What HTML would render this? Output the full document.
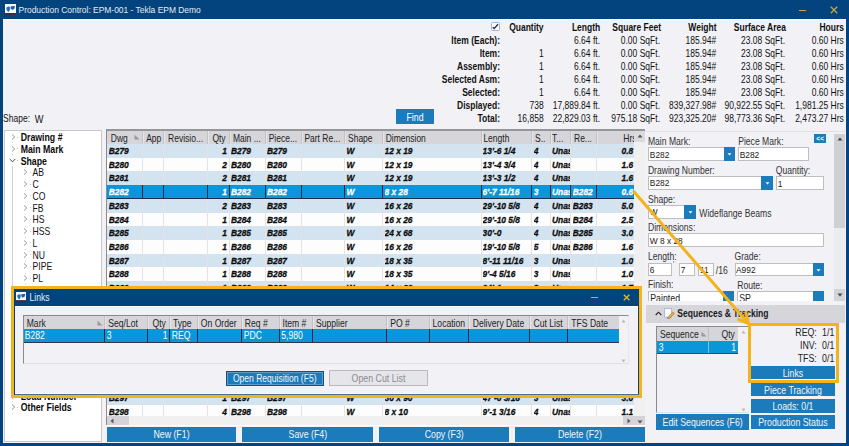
<!DOCTYPE html>
<html><head><meta charset="utf-8"><style>
html,body{margin:0;padding:0;width:849px;height:446px;overflow:hidden;background:#03447f}
div{position:absolute;box-sizing:border-box}
.t{font-family:"Liberation Sans",sans-serif;white-space:nowrap;transform:scaleY(1.18)}
</style></head><body>
<div style="left:0px;top:0px;width:849px;height:446px;background:#03447f"></div>
<div style="left:3px;top:19px;width:843px;height:423.8px;background:#f1f1f6"></div>
<div style="left:3px;top:19px;width:843px;height:1.2px;background:#fbfbfd"></div>
<svg style="position:absolute;left:4.5px;top:4.3px" width="11" height="11" viewBox="0 0 11 11"><rect x="0" y="0" width="11" height="9" fill="#f6f8fa"/><path d="M1.4 3.6 L3.2 2.4 L5.2 3.1 L4.9 5.8 L3.7 7.9 L2.5 7.2 L1.5 5.4 Z" fill="#1f6fb8"/><path d="M5.8 2.3 L10 1.9 L9.4 4.8 L7.2 6.1 L5.7 4.6 Z" fill="#1a5fa8"/><rect x="0" y="9" width="11" height="1.6" fill="#4a2626"/></svg>
<div class="t" style="top:2.9px;line-height:12px;font-size:8.45px;color:#e6ecf3;left:18.5px;">Production Control: EPM-001 - Tekla EPM Demo</div>
<div style="left:799px;top:9.5px;width:7px;height:1.1px;background:#c8a63c"></div>
<svg style="position:absolute;left:830px;top:6px" width="8" height="8" viewBox="0 0 8 8"><path d="M0.8 0.8 L7.2 7.2 M7.2 0.8 L0.8 7.2" stroke="#c8a63c" stroke-width="1.3"/></svg>
<div style="left:490.6px;top:21.6px;width:9px;height:9.8px;background:#fafbff;border:1px solid #a9b1d6;border-radius:1.5px;box-sizing:border-box"></div>
<svg style="position:absolute;left:491px;top:22px" width="9" height="9" viewBox="0 0 9 9"><path d="M1.8 5.2 L3.2 6.6 L7 2.3" stroke="#2a2d3a" stroke-width="1.35" fill="none"/></svg>
<div class="t" style="top:21px;line-height:12px;font-size:8.5px;color:#111;font-weight:bold;right:305.4px;text-align:right;">Quantity</div>
<div class="t" style="top:21px;line-height:12px;font-size:8.5px;color:#111;font-weight:bold;right:248.8px;text-align:right;">Length</div>
<div class="t" style="top:21px;line-height:12px;font-size:8.5px;color:#111;font-weight:bold;right:188px;text-align:right;">Square Feet</div>
<div class="t" style="top:21px;line-height:12px;font-size:8.5px;color:#111;font-weight:bold;right:132.5px;text-align:right;">Weight</div>
<div class="t" style="top:21px;line-height:12px;font-size:8.5px;color:#111;font-weight:bold;right:63px;text-align:right;">Surface Area</div>
<div class="t" style="top:21px;line-height:12px;font-size:8.5px;color:#111;font-weight:bold;right:5px;text-align:right;">Hours</div>
<div class="t" style="top:34.1px;line-height:12px;font-size:8.5px;color:#111;font-weight:bold;right:349px;text-align:right;">Item (Each):</div>
<div class="t" style="top:34.1px;line-height:12px;font-size:8.5px;color:#111;right:249px;text-align:right;">6.64 ft.</div>
<div class="t" style="top:34.1px;line-height:12px;font-size:8.5px;color:#111;right:189px;text-align:right;">0.00 SqFt.</div>
<div class="t" style="top:34.1px;line-height:12px;font-size:8.5px;color:#111;right:132.7px;text-align:right;">185.94#</div>
<div class="t" style="top:34.1px;line-height:12px;font-size:8.5px;color:#111;right:64px;text-align:right;">23.08 SqFt.</div>
<div class="t" style="top:34.1px;line-height:12px;font-size:8.5px;color:#111;right:5.2px;text-align:right;">0.60 Hrs</div>
<div class="t" style="top:47.15px;line-height:12px;font-size:8.5px;color:#111;font-weight:bold;right:349px;text-align:right;">Item:</div>
<div class="t" style="top:47.15px;line-height:12px;font-size:8.5px;color:#111;right:305.4px;text-align:right;">1</div>
<div class="t" style="top:47.15px;line-height:12px;font-size:8.5px;color:#111;right:249px;text-align:right;">6.64 ft.</div>
<div class="t" style="top:47.15px;line-height:12px;font-size:8.5px;color:#111;right:189px;text-align:right;">0.00 SqFt.</div>
<div class="t" style="top:47.15px;line-height:12px;font-size:8.5px;color:#111;right:132.7px;text-align:right;">185.94#</div>
<div class="t" style="top:47.15px;line-height:12px;font-size:8.5px;color:#111;right:64px;text-align:right;">23.08 SqFt.</div>
<div class="t" style="top:47.15px;line-height:12px;font-size:8.5px;color:#111;right:5.2px;text-align:right;">0.60 Hrs</div>
<div class="t" style="top:60.2px;line-height:12px;font-size:8.5px;color:#111;font-weight:bold;right:349px;text-align:right;">Assembly:</div>
<div class="t" style="top:60.2px;line-height:12px;font-size:8.5px;color:#111;right:305.4px;text-align:right;">1</div>
<div class="t" style="top:60.2px;line-height:12px;font-size:8.5px;color:#111;right:249px;text-align:right;">6.64 ft.</div>
<div class="t" style="top:60.2px;line-height:12px;font-size:8.5px;color:#111;right:189px;text-align:right;">0.00 SqFt.</div>
<div class="t" style="top:60.2px;line-height:12px;font-size:8.5px;color:#111;right:132.7px;text-align:right;">185.94#</div>
<div class="t" style="top:60.2px;line-height:12px;font-size:8.5px;color:#111;right:64px;text-align:right;">23.08 SqFt.</div>
<div class="t" style="top:60.2px;line-height:12px;font-size:8.5px;color:#111;right:5.2px;text-align:right;">0.60 Hrs</div>
<div class="t" style="top:73.25px;line-height:12px;font-size:8.5px;color:#111;font-weight:bold;right:349px;text-align:right;">Selected Asm:</div>
<div class="t" style="top:73.25px;line-height:12px;font-size:8.5px;color:#111;right:305.4px;text-align:right;">1</div>
<div class="t" style="top:73.25px;line-height:12px;font-size:8.5px;color:#111;right:249px;text-align:right;">6.64 ft.</div>
<div class="t" style="top:73.25px;line-height:12px;font-size:8.5px;color:#111;right:189px;text-align:right;">0.00 SqFt.</div>
<div class="t" style="top:73.25px;line-height:12px;font-size:8.5px;color:#111;right:132.7px;text-align:right;">185.94#</div>
<div class="t" style="top:73.25px;line-height:12px;font-size:8.5px;color:#111;right:64px;text-align:right;">23.08 SqFt.</div>
<div class="t" style="top:73.25px;line-height:12px;font-size:8.5px;color:#111;right:5.2px;text-align:right;">0.60 Hrs</div>
<div class="t" style="top:86.3px;line-height:12px;font-size:8.5px;color:#111;font-weight:bold;right:349px;text-align:right;">Selected:</div>
<div class="t" style="top:86.3px;line-height:12px;font-size:8.5px;color:#111;right:305.4px;text-align:right;">1</div>
<div class="t" style="top:86.3px;line-height:12px;font-size:8.5px;color:#111;right:249px;text-align:right;">6.64 ft.</div>
<div class="t" style="top:86.3px;line-height:12px;font-size:8.5px;color:#111;right:189px;text-align:right;">0.00 SqFt.</div>
<div class="t" style="top:86.3px;line-height:12px;font-size:8.5px;color:#111;right:132.7px;text-align:right;">185.94#</div>
<div class="t" style="top:86.3px;line-height:12px;font-size:8.5px;color:#111;right:64px;text-align:right;">23.08 SqFt.</div>
<div class="t" style="top:86.3px;line-height:12px;font-size:8.5px;color:#111;right:5.2px;text-align:right;">0.60 Hrs</div>
<div class="t" style="top:99.35px;line-height:12px;font-size:8.5px;color:#111;font-weight:bold;right:349px;text-align:right;">Displayed:</div>
<div class="t" style="top:99.35px;line-height:12px;font-size:8.5px;color:#111;right:305.4px;text-align:right;">738</div>
<div class="t" style="top:99.35px;line-height:12px;font-size:8.5px;color:#111;right:249px;text-align:right;">17,889.84 ft.</div>
<div class="t" style="top:99.35px;line-height:12px;font-size:8.5px;color:#111;right:189px;text-align:right;">0.00 SqFt.</div>
<div class="t" style="top:99.35px;line-height:12px;font-size:8.5px;color:#111;right:132.7px;text-align:right;">839,327.98#</div>
<div class="t" style="top:99.35px;line-height:12px;font-size:8.5px;color:#111;right:64px;text-align:right;">90,922.55 SqFt.</div>
<div class="t" style="top:99.35px;line-height:12px;font-size:8.5px;color:#111;right:5.2px;text-align:right;">1,981.25 Hrs</div>
<div class="t" style="top:112.4px;line-height:12px;font-size:8.5px;color:#111;font-weight:bold;right:349px;text-align:right;">Total:</div>
<div class="t" style="top:112.4px;line-height:12px;font-size:8.5px;color:#111;right:305.4px;text-align:right;">16,858</div>
<div class="t" style="top:112.4px;line-height:12px;font-size:8.5px;color:#111;right:249px;text-align:right;">22,829.03 ft.</div>
<div class="t" style="top:112.4px;line-height:12px;font-size:8.5px;color:#111;right:189px;text-align:right;">975.18 SqFt.</div>
<div class="t" style="top:112.4px;line-height:12px;font-size:8.5px;color:#111;right:132.7px;text-align:right;">923,325.20#</div>
<div class="t" style="top:112.4px;line-height:12px;font-size:8.5px;color:#111;right:64px;text-align:right;">98,773.36 SqFt.</div>
<div class="t" style="top:112.4px;line-height:12px;font-size:8.5px;color:#111;right:5.2px;text-align:right;">2,473.27 Hrs</div>
<div class="t" style="top:112px;line-height:12px;font-size:8.5px;color:#111;left:3.1px;">Shape:</div>
<div class="t" style="top:112.5px;line-height:12px;font-size:9.2px;color:#111;left:34.8px;">W</div>
<div style="left:396px;top:109px;width:38px;height:15px;background:#1c7bba"></div>
<div class="t" style="top:110.5px;line-height:12px;font-size:8.8px;color:#fff;left:396px;width:38px;text-align:center;">Find</div>
<div style="left:3.5px;top:130px;width:98.3px;height:312px;background:#fff;border:1px solid #c9c9cd;box-sizing:border-box"></div>
<svg style="position:absolute;left:10.6px;top:134px" width="5" height="6" viewBox="0 0 5 6"><path d="M1 0.5 L3.8 3 L1 5.5" stroke="#8a8a8a" stroke-width="0.9" fill="none"/></svg>
<div class="t" style="top:131px;line-height:12px;font-size:8.75px;color:#0a0a0a;font-weight:bold;left:20.7px;">Drawing #</div>
<svg style="position:absolute;left:10.6px;top:145.75px" width="5" height="6" viewBox="0 0 5 6"><path d="M1 0.5 L3.8 3 L1 5.5" stroke="#8a8a8a" stroke-width="0.9" fill="none"/></svg>
<div class="t" style="top:142.75px;line-height:12px;font-size:8.75px;color:#0a0a0a;font-weight:bold;left:20.7px;">Main Mark</div>
<svg style="position:absolute;left:9.4px;top:158px" width="7" height="5" viewBox="0 0 7 5"><path d="M0.7 1 L3.5 3.8 L6.3 1" stroke="#444" stroke-width="1" fill="none"/></svg>
<div class="t" style="top:154.5px;line-height:12px;font-size:8.75px;color:#0a0a0a;font-weight:bold;left:20.7px;">Shape</div>
<svg style="position:absolute;left:22.7px;top:169.25px" width="5" height="6" viewBox="0 0 5 6"><path d="M1 0.5 L3.8 3 L1 5.5" stroke="#8a8a8a" stroke-width="0.9" fill="none"/></svg>
<div class="t" style="top:166.25px;line-height:12px;font-size:8.6px;color:#111;left:32.6px;">AB</div>
<svg style="position:absolute;left:22.7px;top:181px" width="5" height="6" viewBox="0 0 5 6"><path d="M1 0.5 L3.8 3 L1 5.5" stroke="#8a8a8a" stroke-width="0.9" fill="none"/></svg>
<div class="t" style="top:178px;line-height:12px;font-size:8.6px;color:#111;left:32.6px;">C</div>
<svg style="position:absolute;left:22.7px;top:192.75px" width="5" height="6" viewBox="0 0 5 6"><path d="M1 0.5 L3.8 3 L1 5.5" stroke="#8a8a8a" stroke-width="0.9" fill="none"/></svg>
<div class="t" style="top:189.75px;line-height:12px;font-size:8.6px;color:#111;left:32.6px;">CO</div>
<svg style="position:absolute;left:22.7px;top:204.5px" width="5" height="6" viewBox="0 0 5 6"><path d="M1 0.5 L3.8 3 L1 5.5" stroke="#8a8a8a" stroke-width="0.9" fill="none"/></svg>
<div class="t" style="top:201.5px;line-height:12px;font-size:8.6px;color:#111;left:32.6px;">FB</div>
<svg style="position:absolute;left:22.7px;top:216.25px" width="5" height="6" viewBox="0 0 5 6"><path d="M1 0.5 L3.8 3 L1 5.5" stroke="#8a8a8a" stroke-width="0.9" fill="none"/></svg>
<div class="t" style="top:213.25px;line-height:12px;font-size:8.6px;color:#111;left:32.6px;">HS</div>
<svg style="position:absolute;left:22.7px;top:228px" width="5" height="6" viewBox="0 0 5 6"><path d="M1 0.5 L3.8 3 L1 5.5" stroke="#8a8a8a" stroke-width="0.9" fill="none"/></svg>
<div class="t" style="top:225px;line-height:12px;font-size:8.6px;color:#111;left:32.6px;">HSS</div>
<svg style="position:absolute;left:22.7px;top:239.75px" width="5" height="6" viewBox="0 0 5 6"><path d="M1 0.5 L3.8 3 L1 5.5" stroke="#8a8a8a" stroke-width="0.9" fill="none"/></svg>
<div class="t" style="top:236.75px;line-height:12px;font-size:8.6px;color:#111;left:32.6px;">L</div>
<svg style="position:absolute;left:22.7px;top:251.5px" width="5" height="6" viewBox="0 0 5 6"><path d="M1 0.5 L3.8 3 L1 5.5" stroke="#8a8a8a" stroke-width="0.9" fill="none"/></svg>
<div class="t" style="top:248.5px;line-height:12px;font-size:8.6px;color:#111;left:32.6px;">NU</div>
<svg style="position:absolute;left:22.7px;top:263.25px" width="5" height="6" viewBox="0 0 5 6"><path d="M1 0.5 L3.8 3 L1 5.5" stroke="#8a8a8a" stroke-width="0.9" fill="none"/></svg>
<div class="t" style="top:260.25px;line-height:12px;font-size:8.6px;color:#111;left:32.6px;">PIPE</div>
<svg style="position:absolute;left:22.7px;top:275px" width="5" height="6" viewBox="0 0 5 6"><path d="M1 0.5 L3.8 3 L1 5.5" stroke="#8a8a8a" stroke-width="0.9" fill="none"/></svg>
<div class="t" style="top:272px;line-height:12px;font-size:8.6px;color:#111;left:32.6px;">PL</div>
<svg style="position:absolute;left:22.7px;top:286.75px" width="5" height="6" viewBox="0 0 5 6"><path d="M1 0.5 L3.8 3 L1 5.5" stroke="#8a8a8a" stroke-width="0.9" fill="none"/></svg>
<div class="t" style="top:283.75px;line-height:12px;font-size:8.6px;color:#111;left:32.6px;">W</div>
<svg style="position:absolute;left:22.7px;top:298.5px" width="5" height="6" viewBox="0 0 5 6"><path d="M1 0.5 L3.8 3 L1 5.5" stroke="#8a8a8a" stroke-width="0.9" fill="none"/></svg>
<div class="t" style="top:295.5px;line-height:12px;font-size:8.6px;color:#111;left:32.6px;">WT</div>
<svg style="position:absolute;left:10.6px;top:310.25px" width="5" height="6" viewBox="0 0 5 6"><path d="M1 0.5 L3.8 3 L1 5.5" stroke="#8a8a8a" stroke-width="0.9" fill="none"/></svg>
<div class="t" style="top:307.25px;line-height:12px;font-size:8.75px;color:#0a0a0a;font-weight:bold;left:20.7px;">Sequence</div>
<svg style="position:absolute;left:10.6px;top:322px" width="5" height="6" viewBox="0 0 5 6"><path d="M1 0.5 L3.8 3 L1 5.5" stroke="#8a8a8a" stroke-width="0.9" fill="none"/></svg>
<div class="t" style="top:319px;line-height:12px;font-size:8.75px;color:#0a0a0a;font-weight:bold;left:20.7px;">Route</div>
<svg style="position:absolute;left:10.6px;top:333.75px" width="5" height="6" viewBox="0 0 5 6"><path d="M1 0.5 L3.8 3 L1 5.5" stroke="#8a8a8a" stroke-width="0.9" fill="none"/></svg>
<div class="t" style="top:330.75px;line-height:12px;font-size:8.75px;color:#0a0a0a;font-weight:bold;left:20.7px;">Grade</div>
<svg style="position:absolute;left:10.6px;top:345.5px" width="5" height="6" viewBox="0 0 5 6"><path d="M1 0.5 L3.8 3 L1 5.5" stroke="#8a8a8a" stroke-width="0.9" fill="none"/></svg>
<div class="t" style="top:342.5px;line-height:12px;font-size:8.75px;color:#0a0a0a;font-weight:bold;left:20.7px;">Finish</div>
<svg style="position:absolute;left:10.6px;top:357.25px" width="5" height="6" viewBox="0 0 5 6"><path d="M1 0.5 L3.8 3 L1 5.5" stroke="#8a8a8a" stroke-width="0.9" fill="none"/></svg>
<div class="t" style="top:354.25px;line-height:12px;font-size:8.75px;color:#0a0a0a;font-weight:bold;left:20.7px;">Status</div>
<svg style="position:absolute;left:10.6px;top:369px" width="5" height="6" viewBox="0 0 5 6"><path d="M1 0.5 L3.8 3 L1 5.5" stroke="#8a8a8a" stroke-width="0.9" fill="none"/></svg>
<div class="t" style="top:366px;line-height:12px;font-size:8.75px;color:#0a0a0a;font-weight:bold;left:20.7px;">Site</div>
<svg style="position:absolute;left:10.6px;top:380.75px" width="5" height="6" viewBox="0 0 5 6"><path d="M1 0.5 L3.8 3 L1 5.5" stroke="#8a8a8a" stroke-width="0.9" fill="none"/></svg>
<div class="t" style="top:377.75px;line-height:12px;font-size:8.75px;color:#0a0a0a;font-weight:bold;left:20.7px;">Truck</div>
<svg style="position:absolute;left:10.6px;top:392.5px" width="5" height="6" viewBox="0 0 5 6"><path d="M1 0.5 L3.8 3 L1 5.5" stroke="#8a8a8a" stroke-width="0.9" fill="none"/></svg>
<div class="t" style="top:389.5px;line-height:12px;font-size:8.75px;color:#0a0a0a;font-weight:bold;left:20.7px;">Load Number</div>
<svg style="position:absolute;left:10.6px;top:404.25px" width="5" height="6" viewBox="0 0 5 6"><path d="M1 0.5 L3.8 3 L1 5.5" stroke="#8a8a8a" stroke-width="0.9" fill="none"/></svg>
<div class="t" style="top:401.25px;line-height:12px;font-size:8.75px;color:#0a0a0a;font-weight:bold;left:20.7px;">Other Fields</div>
<div style="left:12px;top:165.7px;width:1px;height:124.3px;background:#d0d0d3"></div>
<div style="left:17.4px;top:136.5px;width:1px;height:1px;background:#c4c4c8"></div>
<div style="left:12px;top:142.4px;width:1px;height:1px;background:#d0d0d4"></div>
<div style="left:17.4px;top:148.25px;width:1px;height:1px;background:#c4c4c8"></div>
<div style="left:12px;top:154.15px;width:1px;height:1px;background:#d0d0d4"></div>
<div style="left:17.4px;top:160px;width:1px;height:1px;background:#c4c4c8"></div>
<div style="left:12px;top:165.9px;width:1px;height:1px;background:#d0d0d4"></div>
<div style="left:29.5px;top:171.75px;width:1px;height:1px;background:#c4c4c8"></div>
<div style="left:24.5px;top:166.75px;width:1px;height:1px;background:#d0d0d4"></div>
<div style="left:29.5px;top:183.5px;width:1px;height:1px;background:#c4c4c8"></div>
<div style="left:24.5px;top:178.5px;width:1px;height:1px;background:#d0d0d4"></div>
<div style="left:29.5px;top:195.25px;width:1px;height:1px;background:#c4c4c8"></div>
<div style="left:24.5px;top:190.25px;width:1px;height:1px;background:#d0d0d4"></div>
<div style="left:29.5px;top:207px;width:1px;height:1px;background:#c4c4c8"></div>
<div style="left:24.5px;top:202px;width:1px;height:1px;background:#d0d0d4"></div>
<div style="left:29.5px;top:218.75px;width:1px;height:1px;background:#c4c4c8"></div>
<div style="left:24.5px;top:213.75px;width:1px;height:1px;background:#d0d0d4"></div>
<div style="left:29.5px;top:230.5px;width:1px;height:1px;background:#c4c4c8"></div>
<div style="left:24.5px;top:225.5px;width:1px;height:1px;background:#d0d0d4"></div>
<div style="left:29.5px;top:242.25px;width:1px;height:1px;background:#c4c4c8"></div>
<div style="left:24.5px;top:237.25px;width:1px;height:1px;background:#d0d0d4"></div>
<div style="left:29.5px;top:254px;width:1px;height:1px;background:#c4c4c8"></div>
<div style="left:24.5px;top:249px;width:1px;height:1px;background:#d0d0d4"></div>
<div style="left:29.5px;top:265.75px;width:1px;height:1px;background:#c4c4c8"></div>
<div style="left:24.5px;top:260.75px;width:1px;height:1px;background:#d0d0d4"></div>
<div style="left:29.5px;top:277.5px;width:1px;height:1px;background:#c4c4c8"></div>
<div style="left:24.5px;top:272.5px;width:1px;height:1px;background:#d0d0d4"></div>
<div style="left:29.5px;top:289.25px;width:1px;height:1px;background:#c4c4c8"></div>
<div style="left:24.5px;top:284.25px;width:1px;height:1px;background:#d0d0d4"></div>
<div style="left:29.5px;top:301px;width:1px;height:1px;background:#c4c4c8"></div>
<div style="left:24.5px;top:296px;width:1px;height:1px;background:#d0d0d4"></div>
<div style="left:17.4px;top:312.75px;width:1px;height:1px;background:#c4c4c8"></div>
<div style="left:12px;top:318.65px;width:1px;height:1px;background:#d0d0d4"></div>
<div style="left:17.4px;top:324.5px;width:1px;height:1px;background:#c4c4c8"></div>
<div style="left:12px;top:330.4px;width:1px;height:1px;background:#d0d0d4"></div>
<div style="left:17.4px;top:336.25px;width:1px;height:1px;background:#c4c4c8"></div>
<div style="left:12px;top:342.15px;width:1px;height:1px;background:#d0d0d4"></div>
<div style="left:17.4px;top:348px;width:1px;height:1px;background:#c4c4c8"></div>
<div style="left:12px;top:353.9px;width:1px;height:1px;background:#d0d0d4"></div>
<div style="left:17.4px;top:359.75px;width:1px;height:1px;background:#c4c4c8"></div>
<div style="left:12px;top:365.65px;width:1px;height:1px;background:#d0d0d4"></div>
<div style="left:17.4px;top:371.5px;width:1px;height:1px;background:#c4c4c8"></div>
<div style="left:12px;top:377.4px;width:1px;height:1px;background:#d0d0d4"></div>
<div style="left:17.4px;top:383.25px;width:1px;height:1px;background:#c4c4c8"></div>
<div style="left:12px;top:389.15px;width:1px;height:1px;background:#d0d0d4"></div>
<div style="left:17.4px;top:395px;width:1px;height:1px;background:#c4c4c8"></div>
<div style="left:12px;top:400.9px;width:1px;height:1px;background:#d0d0d4"></div>
<div style="left:17.4px;top:406.75px;width:1px;height:1px;background:#c4c4c8"></div>
<div style="left:12px;top:412.65px;width:1px;height:1px;background:#d0d0d4"></div>
<div style="left:105.5px;top:129px;width:539.5px;height:296.5px;background:#fff"></div>
<div style="left:105.5px;top:128.8px;width:539.5px;height:1.8px;background:#b4b4b8"></div>
<div style="left:105.5px;top:129.3px;width:539.5px;height:1.3px;background:#96969a"></div>
<div style="left:106px;top:129.3px;width:1.1px;height:296.2px;background:#8c8c90"></div>
<div style="left:107px;top:130.6px;width:527.2px;height:13.4px;background:#d6d6da"></div>
<div style="left:142.2px;top:130.6px;width:1px;height:13.4px;background:#c2c2c6"></div>
<div style="left:143.2px;top:130.6px;width:0.7px;height:13.4px;background:#e6e6ea"></div>
<div style="left:163.4px;top:130.6px;width:1px;height:13.4px;background:#c2c2c6"></div>
<div style="left:164.4px;top:130.6px;width:0.7px;height:13.4px;background:#e6e6ea"></div>
<div style="left:206.5px;top:130.6px;width:1px;height:13.4px;background:#c2c2c6"></div>
<div style="left:207.5px;top:130.6px;width:0.7px;height:13.4px;background:#e6e6ea"></div>
<div style="left:228.9px;top:130.6px;width:1px;height:13.4px;background:#c2c2c6"></div>
<div style="left:229.9px;top:130.6px;width:0.7px;height:13.4px;background:#e6e6ea"></div>
<div style="left:264.7px;top:130.6px;width:1px;height:13.4px;background:#c2c2c6"></div>
<div style="left:265.7px;top:130.6px;width:0.7px;height:13.4px;background:#e6e6ea"></div>
<div style="left:300.5px;top:130.6px;width:1px;height:13.4px;background:#c2c2c6"></div>
<div style="left:301.5px;top:130.6px;width:0.7px;height:13.4px;background:#e6e6ea"></div>
<div style="left:344px;top:130.6px;width:1px;height:13.4px;background:#c2c2c6"></div>
<div style="left:345px;top:130.6px;width:0.7px;height:13.4px;background:#e6e6ea"></div>
<div style="left:381.7px;top:130.6px;width:1px;height:13.4px;background:#c2c2c6"></div>
<div style="left:382.7px;top:130.6px;width:0.7px;height:13.4px;background:#e6e6ea"></div>
<div style="left:480.5px;top:130.6px;width:1px;height:13.4px;background:#c2c2c6"></div>
<div style="left:481.5px;top:130.6px;width:0.7px;height:13.4px;background:#e6e6ea"></div>
<div style="left:531.2px;top:130.6px;width:1px;height:13.4px;background:#c2c2c6"></div>
<div style="left:532.2px;top:130.6px;width:0.7px;height:13.4px;background:#e6e6ea"></div>
<div style="left:549.5px;top:130.6px;width:1px;height:13.4px;background:#c2c2c6"></div>
<div style="left:550.5px;top:130.6px;width:0.7px;height:13.4px;background:#e6e6ea"></div>
<div style="left:569.5px;top:130.6px;width:1px;height:13.4px;background:#c2c2c6"></div>
<div style="left:570.5px;top:130.6px;width:0.7px;height:13.4px;background:#e6e6ea"></div>
<div style="left:595.6px;top:130.6px;width:1px;height:13.4px;background:#c2c2c6"></div>
<div style="left:596.6px;top:130.6px;width:0.7px;height:13.4px;background:#e6e6ea"></div>
<div class="t" style="top:131.5px;line-height:12px;font-size:8.5px;color:#222;left:110.8px;">Dwg</div>
<div class="t" style="top:131.5px;line-height:12px;font-size:8.5px;color:#222;left:146.2px;">App</div>
<div class="t" style="top:131.5px;line-height:12px;font-size:8.5px;color:#222;left:168.1px;">Revisio...</div>
<div class="t" style="top:131.5px;line-height:12px;font-size:8.5px;color:#222;right:623.4px;text-align:right;">Qty</div>
<div class="t" style="top:131.5px;line-height:12px;font-size:8.5px;color:#222;left:232.9px;">Main ...</div>
<div class="t" style="top:131.5px;line-height:12px;font-size:8.5px;color:#222;left:268.7px;">Piece...</div>
<div class="t" style="top:131.5px;line-height:12px;font-size:8.5px;color:#222;left:304.4px;">Part Re...</div>
<div class="t" style="top:131.5px;line-height:12px;font-size:8.5px;color:#222;left:348px;">Shape</div>
<div class="t" style="top:131.5px;line-height:12px;font-size:8.5px;color:#222;left:385.7px;">Dimension</div>
<div class="t" style="top:131.5px;line-height:12px;font-size:8.5px;color:#222;left:483.4px;">Length</div>
<div class="t" style="top:131.5px;line-height:12px;font-size:8.5px;color:#222;left:535px;">S..</div>
<div class="t" style="top:131.5px;line-height:12px;font-size:8.5px;color:#222;left:552px;">T...</div>
<div class="t" style="top:131.5px;line-height:12px;font-size:8.5px;color:#222;left:574px;">Re...</div>
<div style="left:597px;top:131px;width:37.2px;height:13px;overflow:hidden"><div class="t" style="right:-2.3px;top:0.5px;line-height:12px;font-size:8.5px;color:#222">Hrs</div></div>
<svg style="position:absolute;left:134px;top:134px" width="6" height="6" viewBox="0 0 6 6"><path d="M0.5 0.5 L5.5 5.5 L0.5 5.5 Z" fill="#9a9a9a"/></svg>
<div style="left:107px;top:144px;width:527.2px;height:13.72px;background:#d3e3ef"></div>
<div style="left:142.2px;top:144px;width:1px;height:13.72px;background:#e3e3e6"></div>
<div style="left:163.4px;top:144px;width:1px;height:13.72px;background:#e3e3e6"></div>
<div style="left:206.5px;top:144px;width:1px;height:13.72px;background:#e3e3e6"></div>
<div style="left:228.9px;top:144px;width:1px;height:13.72px;background:#e3e3e6"></div>
<div style="left:264.7px;top:144px;width:1px;height:13.72px;background:#e3e3e6"></div>
<div style="left:300.5px;top:144px;width:1px;height:13.72px;background:#e3e3e6"></div>
<div style="left:344px;top:144px;width:1px;height:13.72px;background:#e3e3e6"></div>
<div style="left:381.7px;top:144px;width:1px;height:13.72px;background:#e3e3e6"></div>
<div style="left:480.5px;top:144px;width:1px;height:13.72px;background:#e3e3e6"></div>
<div style="left:531.2px;top:144px;width:1px;height:13.72px;background:#e3e3e6"></div>
<div style="left:549.5px;top:144px;width:1px;height:13.72px;background:#e3e3e6"></div>
<div style="left:569.5px;top:144px;width:1px;height:13.72px;background:#e3e3e6"></div>
<div style="left:595.6px;top:144px;width:1px;height:13.72px;background:#e3e3e6"></div>
<div class="t" style="top:143.96px;line-height:12px;font-size:8.4px;color:#0c0c0c;font-weight:bold;font-style:italic;left:108.7px;width:33.5px;overflow:hidden;-webkit-text-stroke:0.25px #0c0c0c;">B279</div>
<div class="t" style="top:143.96px;line-height:12px;font-size:8.4px;color:#0c0c0c;font-weight:bold;font-style:italic;right:622px;text-align:right;-webkit-text-stroke:0.25px #0c0c0c;">1</div>
<div class="t" style="top:143.96px;line-height:12px;font-size:8.4px;color:#0c0c0c;font-weight:bold;font-style:italic;left:231px;width:33.7px;overflow:hidden;-webkit-text-stroke:0.25px #0c0c0c;">B279</div>
<div class="t" style="top:143.96px;line-height:12px;font-size:8.4px;color:#0c0c0c;font-weight:bold;font-style:italic;left:267px;width:33.5px;overflow:hidden;-webkit-text-stroke:0.25px #0c0c0c;">B279</div>
<div class="t" style="top:143.96px;line-height:12px;font-size:8.4px;color:#0c0c0c;font-weight:bold;font-style:italic;left:346.4px;width:35.3px;overflow:hidden;-webkit-text-stroke:0.25px #0c0c0c;">W</div>
<div class="t" style="top:143.96px;line-height:12px;font-size:8.4px;color:#0c0c0c;font-weight:bold;font-style:italic;left:384.5px;width:96px;overflow:hidden;-webkit-text-stroke:0.25px #0c0c0c;">12 x 19</div>
<div class="t" style="top:143.96px;line-height:12px;font-size:8.4px;color:#0c0c0c;font-weight:bold;font-style:italic;left:482.6px;width:48.6px;overflow:hidden;-webkit-text-stroke:0.25px #0c0c0c;">13'-6 1/4</div>
<div class="t" style="top:143.96px;line-height:12px;font-size:8.4px;color:#0c0c0c;font-weight:bold;font-style:italic;left:533.7px;width:15.8px;overflow:hidden;-webkit-text-stroke:0.25px #0c0c0c;">4</div>
<div class="t" style="top:143.96px;line-height:12px;font-size:8.4px;color:#0c0c0c;font-weight:bold;font-style:italic;left:552px;width:17.5px;overflow:hidden;-webkit-text-stroke:0.25px #0c0c0c;">Unas</div>
<div class="t" style="top:143.96px;line-height:12px;font-size:8.4px;color:#0c0c0c;font-weight:bold;font-style:italic;right:215.8px;text-align:right;-webkit-text-stroke:0.25px #0c0c0c;">0.8</div>
<div style="left:107px;top:157.72px;width:527.2px;height:13.72px;background:#fdfdfd"></div>
<div style="left:142.2px;top:157.72px;width:1px;height:13.72px;background:#e3e3e6"></div>
<div style="left:163.4px;top:157.72px;width:1px;height:13.72px;background:#e3e3e6"></div>
<div style="left:206.5px;top:157.72px;width:1px;height:13.72px;background:#e3e3e6"></div>
<div style="left:228.9px;top:157.72px;width:1px;height:13.72px;background:#e3e3e6"></div>
<div style="left:264.7px;top:157.72px;width:1px;height:13.72px;background:#e3e3e6"></div>
<div style="left:300.5px;top:157.72px;width:1px;height:13.72px;background:#e3e3e6"></div>
<div style="left:344px;top:157.72px;width:1px;height:13.72px;background:#e3e3e6"></div>
<div style="left:381.7px;top:157.72px;width:1px;height:13.72px;background:#e3e3e6"></div>
<div style="left:480.5px;top:157.72px;width:1px;height:13.72px;background:#e3e3e6"></div>
<div style="left:531.2px;top:157.72px;width:1px;height:13.72px;background:#e3e3e6"></div>
<div style="left:549.5px;top:157.72px;width:1px;height:13.72px;background:#e3e3e6"></div>
<div style="left:569.5px;top:157.72px;width:1px;height:13.72px;background:#e3e3e6"></div>
<div style="left:595.6px;top:157.72px;width:1px;height:13.72px;background:#e3e3e6"></div>
<div class="t" style="top:157.67px;line-height:12px;font-size:8.4px;color:#0c0c0c;font-weight:bold;font-style:italic;left:108.7px;width:33.5px;overflow:hidden;-webkit-text-stroke:0.25px #0c0c0c;">B280</div>
<div class="t" style="top:157.67px;line-height:12px;font-size:8.4px;color:#0c0c0c;font-weight:bold;font-style:italic;right:622px;text-align:right;-webkit-text-stroke:0.25px #0c0c0c;">2</div>
<div class="t" style="top:157.67px;line-height:12px;font-size:8.4px;color:#0c0c0c;font-weight:bold;font-style:italic;left:231px;width:33.7px;overflow:hidden;-webkit-text-stroke:0.25px #0c0c0c;">B280</div>
<div class="t" style="top:157.67px;line-height:12px;font-size:8.4px;color:#0c0c0c;font-weight:bold;font-style:italic;left:267px;width:33.5px;overflow:hidden;-webkit-text-stroke:0.25px #0c0c0c;">B280</div>
<div class="t" style="top:157.67px;line-height:12px;font-size:8.4px;color:#0c0c0c;font-weight:bold;font-style:italic;left:346.4px;width:35.3px;overflow:hidden;-webkit-text-stroke:0.25px #0c0c0c;">W</div>
<div class="t" style="top:157.67px;line-height:12px;font-size:8.4px;color:#0c0c0c;font-weight:bold;font-style:italic;left:384.5px;width:96px;overflow:hidden;-webkit-text-stroke:0.25px #0c0c0c;">12 x 19</div>
<div class="t" style="top:157.67px;line-height:12px;font-size:8.4px;color:#0c0c0c;font-weight:bold;font-style:italic;left:482.6px;width:48.6px;overflow:hidden;-webkit-text-stroke:0.25px #0c0c0c;">13'-4 3/4</div>
<div class="t" style="top:157.67px;line-height:12px;font-size:8.4px;color:#0c0c0c;font-weight:bold;font-style:italic;left:533.7px;width:15.8px;overflow:hidden;-webkit-text-stroke:0.25px #0c0c0c;">4</div>
<div class="t" style="top:157.67px;line-height:12px;font-size:8.4px;color:#0c0c0c;font-weight:bold;font-style:italic;left:552px;width:17.5px;overflow:hidden;-webkit-text-stroke:0.25px #0c0c0c;">Unas</div>
<div class="t" style="top:157.67px;line-height:12px;font-size:8.4px;color:#0c0c0c;font-weight:bold;font-style:italic;right:215.8px;text-align:right;-webkit-text-stroke:0.25px #0c0c0c;">1.6</div>
<div style="left:107px;top:171.43px;width:527.2px;height:13.72px;background:#d3e3ef"></div>
<div style="left:142.2px;top:171.43px;width:1px;height:13.72px;background:#e3e3e6"></div>
<div style="left:163.4px;top:171.43px;width:1px;height:13.72px;background:#e3e3e6"></div>
<div style="left:206.5px;top:171.43px;width:1px;height:13.72px;background:#e3e3e6"></div>
<div style="left:228.9px;top:171.43px;width:1px;height:13.72px;background:#e3e3e6"></div>
<div style="left:264.7px;top:171.43px;width:1px;height:13.72px;background:#e3e3e6"></div>
<div style="left:300.5px;top:171.43px;width:1px;height:13.72px;background:#e3e3e6"></div>
<div style="left:344px;top:171.43px;width:1px;height:13.72px;background:#e3e3e6"></div>
<div style="left:381.7px;top:171.43px;width:1px;height:13.72px;background:#e3e3e6"></div>
<div style="left:480.5px;top:171.43px;width:1px;height:13.72px;background:#e3e3e6"></div>
<div style="left:531.2px;top:171.43px;width:1px;height:13.72px;background:#e3e3e6"></div>
<div style="left:549.5px;top:171.43px;width:1px;height:13.72px;background:#e3e3e6"></div>
<div style="left:569.5px;top:171.43px;width:1px;height:13.72px;background:#e3e3e6"></div>
<div style="left:595.6px;top:171.43px;width:1px;height:13.72px;background:#e3e3e6"></div>
<div class="t" style="top:171.39px;line-height:12px;font-size:8.4px;color:#0c0c0c;font-weight:bold;font-style:italic;left:108.7px;width:33.5px;overflow:hidden;-webkit-text-stroke:0.25px #0c0c0c;">B281</div>
<div class="t" style="top:171.39px;line-height:12px;font-size:8.4px;color:#0c0c0c;font-weight:bold;font-style:italic;right:622px;text-align:right;-webkit-text-stroke:0.25px #0c0c0c;">2</div>
<div class="t" style="top:171.39px;line-height:12px;font-size:8.4px;color:#0c0c0c;font-weight:bold;font-style:italic;left:231px;width:33.7px;overflow:hidden;-webkit-text-stroke:0.25px #0c0c0c;">B281</div>
<div class="t" style="top:171.39px;line-height:12px;font-size:8.4px;color:#0c0c0c;font-weight:bold;font-style:italic;left:267px;width:33.5px;overflow:hidden;-webkit-text-stroke:0.25px #0c0c0c;">B281</div>
<div class="t" style="top:171.39px;line-height:12px;font-size:8.4px;color:#0c0c0c;font-weight:bold;font-style:italic;left:346.4px;width:35.3px;overflow:hidden;-webkit-text-stroke:0.25px #0c0c0c;">W</div>
<div class="t" style="top:171.39px;line-height:12px;font-size:8.4px;color:#0c0c0c;font-weight:bold;font-style:italic;left:384.5px;width:96px;overflow:hidden;-webkit-text-stroke:0.25px #0c0c0c;">12 x 19</div>
<div class="t" style="top:171.39px;line-height:12px;font-size:8.4px;color:#0c0c0c;font-weight:bold;font-style:italic;left:482.6px;width:48.6px;overflow:hidden;-webkit-text-stroke:0.25px #0c0c0c;">13'-3 1/2</div>
<div class="t" style="top:171.39px;line-height:12px;font-size:8.4px;color:#0c0c0c;font-weight:bold;font-style:italic;left:533.7px;width:15.8px;overflow:hidden;-webkit-text-stroke:0.25px #0c0c0c;">4</div>
<div class="t" style="top:171.39px;line-height:12px;font-size:8.4px;color:#0c0c0c;font-weight:bold;font-style:italic;left:552px;width:17.5px;overflow:hidden;-webkit-text-stroke:0.25px #0c0c0c;">Unas</div>
<div class="t" style="top:171.39px;line-height:12px;font-size:8.4px;color:#0c0c0c;font-weight:bold;font-style:italic;right:215.8px;text-align:right;-webkit-text-stroke:0.25px #0c0c0c;">1.6</div>
<div style="left:107px;top:185.14px;width:527.2px;height:13.72px;background:#0a96d9"></div>
<div style="left:142.2px;top:185.14px;width:1px;height:13.72px;background:#1a2a3a"></div>
<div style="left:163.4px;top:185.14px;width:1px;height:13.72px;background:#1a2a3a"></div>
<div style="left:206.5px;top:185.14px;width:1px;height:13.72px;background:#1a2a3a"></div>
<div style="left:228.9px;top:185.14px;width:1px;height:13.72px;background:#1a2a3a"></div>
<div style="left:264.7px;top:185.14px;width:1px;height:13.72px;background:#1a2a3a"></div>
<div style="left:300.5px;top:185.14px;width:1px;height:13.72px;background:#1a2a3a"></div>
<div style="left:344px;top:185.14px;width:1px;height:13.72px;background:#1a2a3a"></div>
<div style="left:381.7px;top:185.14px;width:1px;height:13.72px;background:#1a2a3a"></div>
<div style="left:480.5px;top:185.14px;width:1px;height:13.72px;background:#1a2a3a"></div>
<div style="left:531.2px;top:185.14px;width:1px;height:13.72px;background:#1a2a3a"></div>
<div style="left:549.5px;top:185.14px;width:1px;height:13.72px;background:#1a2a3a"></div>
<div style="left:569.5px;top:185.14px;width:1px;height:13.72px;background:#1a2a3a"></div>
<div style="left:595.6px;top:185.14px;width:1px;height:13.72px;background:#1a2a3a"></div>
<div style="left:107px;top:197.66px;width:527.2px;height:1.2px;background:#17324a"></div>
<div class="t" style="top:185.1px;line-height:12px;font-size:8.4px;color:#fff;font-weight:bold;font-style:italic;left:108.7px;width:33.5px;overflow:hidden;-webkit-text-stroke:0.25px #fff;">B282</div>
<div class="t" style="top:185.1px;line-height:12px;font-size:8.4px;color:#fff;font-weight:bold;font-style:italic;right:622px;text-align:right;-webkit-text-stroke:0.25px #fff;">1</div>
<div class="t" style="top:185.1px;line-height:12px;font-size:8.4px;color:#fff;font-weight:bold;font-style:italic;left:231px;width:33.7px;overflow:hidden;-webkit-text-stroke:0.25px #fff;">B282</div>
<div class="t" style="top:185.1px;line-height:12px;font-size:8.4px;color:#fff;font-weight:bold;font-style:italic;left:267px;width:33.5px;overflow:hidden;-webkit-text-stroke:0.25px #fff;">B282</div>
<div class="t" style="top:185.1px;line-height:12px;font-size:8.4px;color:#fff;font-weight:bold;font-style:italic;left:346.4px;width:35.3px;overflow:hidden;-webkit-text-stroke:0.25px #fff;">W</div>
<div class="t" style="top:185.1px;line-height:12px;font-size:8.4px;color:#fff;font-weight:bold;font-style:italic;left:384.5px;width:96px;overflow:hidden;-webkit-text-stroke:0.25px #fff;">8 x 28</div>
<div class="t" style="top:185.1px;line-height:12px;font-size:8.4px;color:#fff;font-weight:bold;font-style:italic;left:482.6px;width:48.6px;overflow:hidden;-webkit-text-stroke:0.25px #fff;">6'-7 11/16</div>
<div class="t" style="top:185.1px;line-height:12px;font-size:8.4px;color:#fff;font-weight:bold;font-style:italic;left:533.7px;width:15.8px;overflow:hidden;-webkit-text-stroke:0.25px #fff;">3</div>
<div class="t" style="top:185.1px;line-height:12px;font-size:8.4px;color:#fff;font-weight:bold;font-style:italic;left:552px;width:17.5px;overflow:hidden;-webkit-text-stroke:0.25px #fff;">Unas</div>
<div class="t" style="top:185.1px;line-height:12px;font-size:8.4px;color:#fff;font-weight:bold;font-style:italic;left:572.7px;width:22.9px;overflow:hidden;-webkit-text-stroke:0.25px #fff;">B282</div>
<div class="t" style="top:185.1px;line-height:12px;font-size:8.4px;color:#fff;font-weight:bold;font-style:italic;right:215.8px;text-align:right;-webkit-text-stroke:0.25px #fff;">0.6</div>
<div style="left:107px;top:198.86px;width:527.2px;height:13.72px;background:#d3e3ef"></div>
<div style="left:142.2px;top:198.86px;width:1px;height:13.72px;background:#e3e3e6"></div>
<div style="left:163.4px;top:198.86px;width:1px;height:13.72px;background:#e3e3e6"></div>
<div style="left:206.5px;top:198.86px;width:1px;height:13.72px;background:#e3e3e6"></div>
<div style="left:228.9px;top:198.86px;width:1px;height:13.72px;background:#e3e3e6"></div>
<div style="left:264.7px;top:198.86px;width:1px;height:13.72px;background:#e3e3e6"></div>
<div style="left:300.5px;top:198.86px;width:1px;height:13.72px;background:#e3e3e6"></div>
<div style="left:344px;top:198.86px;width:1px;height:13.72px;background:#e3e3e6"></div>
<div style="left:381.7px;top:198.86px;width:1px;height:13.72px;background:#e3e3e6"></div>
<div style="left:480.5px;top:198.86px;width:1px;height:13.72px;background:#e3e3e6"></div>
<div style="left:531.2px;top:198.86px;width:1px;height:13.72px;background:#e3e3e6"></div>
<div style="left:549.5px;top:198.86px;width:1px;height:13.72px;background:#e3e3e6"></div>
<div style="left:569.5px;top:198.86px;width:1px;height:13.72px;background:#e3e3e6"></div>
<div style="left:595.6px;top:198.86px;width:1px;height:13.72px;background:#e3e3e6"></div>
<div class="t" style="top:198.82px;line-height:12px;font-size:8.4px;color:#0c0c0c;font-weight:bold;font-style:italic;left:108.7px;width:33.5px;overflow:hidden;-webkit-text-stroke:0.25px #0c0c0c;">B283</div>
<div class="t" style="top:198.82px;line-height:12px;font-size:8.4px;color:#0c0c0c;font-weight:bold;font-style:italic;right:622px;text-align:right;-webkit-text-stroke:0.25px #0c0c0c;">2</div>
<div class="t" style="top:198.82px;line-height:12px;font-size:8.4px;color:#0c0c0c;font-weight:bold;font-style:italic;left:231px;width:33.7px;overflow:hidden;-webkit-text-stroke:0.25px #0c0c0c;">B283</div>
<div class="t" style="top:198.82px;line-height:12px;font-size:8.4px;color:#0c0c0c;font-weight:bold;font-style:italic;left:267px;width:33.5px;overflow:hidden;-webkit-text-stroke:0.25px #0c0c0c;">B283</div>
<div class="t" style="top:198.82px;line-height:12px;font-size:8.4px;color:#0c0c0c;font-weight:bold;font-style:italic;left:346.4px;width:35.3px;overflow:hidden;-webkit-text-stroke:0.25px #0c0c0c;">W</div>
<div class="t" style="top:198.82px;line-height:12px;font-size:8.4px;color:#0c0c0c;font-weight:bold;font-style:italic;left:384.5px;width:96px;overflow:hidden;-webkit-text-stroke:0.25px #0c0c0c;">16 x 26</div>
<div class="t" style="top:198.82px;line-height:12px;font-size:8.4px;color:#0c0c0c;font-weight:bold;font-style:italic;left:482.6px;width:48.6px;overflow:hidden;-webkit-text-stroke:0.25px #0c0c0c;">29'-10 5/8</div>
<div class="t" style="top:198.82px;line-height:12px;font-size:8.4px;color:#0c0c0c;font-weight:bold;font-style:italic;left:533.7px;width:15.8px;overflow:hidden;-webkit-text-stroke:0.25px #0c0c0c;">4</div>
<div class="t" style="top:198.82px;line-height:12px;font-size:8.4px;color:#0c0c0c;font-weight:bold;font-style:italic;left:552px;width:17.5px;overflow:hidden;-webkit-text-stroke:0.25px #0c0c0c;">Unas</div>
<div class="t" style="top:198.82px;line-height:12px;font-size:8.4px;color:#0c0c0c;font-weight:bold;font-style:italic;left:572.7px;width:22.9px;overflow:hidden;-webkit-text-stroke:0.25px #0c0c0c;">B283</div>
<div class="t" style="top:198.82px;line-height:12px;font-size:8.4px;color:#0c0c0c;font-weight:bold;font-style:italic;right:215.8px;text-align:right;-webkit-text-stroke:0.25px #0c0c0c;">5.0</div>
<div style="left:107px;top:212.57px;width:527.2px;height:13.72px;background:#fdfdfd"></div>
<div style="left:142.2px;top:212.57px;width:1px;height:13.72px;background:#e3e3e6"></div>
<div style="left:163.4px;top:212.57px;width:1px;height:13.72px;background:#e3e3e6"></div>
<div style="left:206.5px;top:212.57px;width:1px;height:13.72px;background:#e3e3e6"></div>
<div style="left:228.9px;top:212.57px;width:1px;height:13.72px;background:#e3e3e6"></div>
<div style="left:264.7px;top:212.57px;width:1px;height:13.72px;background:#e3e3e6"></div>
<div style="left:300.5px;top:212.57px;width:1px;height:13.72px;background:#e3e3e6"></div>
<div style="left:344px;top:212.57px;width:1px;height:13.72px;background:#e3e3e6"></div>
<div style="left:381.7px;top:212.57px;width:1px;height:13.72px;background:#e3e3e6"></div>
<div style="left:480.5px;top:212.57px;width:1px;height:13.72px;background:#e3e3e6"></div>
<div style="left:531.2px;top:212.57px;width:1px;height:13.72px;background:#e3e3e6"></div>
<div style="left:549.5px;top:212.57px;width:1px;height:13.72px;background:#e3e3e6"></div>
<div style="left:569.5px;top:212.57px;width:1px;height:13.72px;background:#e3e3e6"></div>
<div style="left:595.6px;top:212.57px;width:1px;height:13.72px;background:#e3e3e6"></div>
<div class="t" style="top:212.53px;line-height:12px;font-size:8.4px;color:#0c0c0c;font-weight:bold;font-style:italic;left:108.7px;width:33.5px;overflow:hidden;-webkit-text-stroke:0.25px #0c0c0c;">B284</div>
<div class="t" style="top:212.53px;line-height:12px;font-size:8.4px;color:#0c0c0c;font-weight:bold;font-style:italic;right:622px;text-align:right;-webkit-text-stroke:0.25px #0c0c0c;">1</div>
<div class="t" style="top:212.53px;line-height:12px;font-size:8.4px;color:#0c0c0c;font-weight:bold;font-style:italic;left:231px;width:33.7px;overflow:hidden;-webkit-text-stroke:0.25px #0c0c0c;">B284</div>
<div class="t" style="top:212.53px;line-height:12px;font-size:8.4px;color:#0c0c0c;font-weight:bold;font-style:italic;left:267px;width:33.5px;overflow:hidden;-webkit-text-stroke:0.25px #0c0c0c;">B284</div>
<div class="t" style="top:212.53px;line-height:12px;font-size:8.4px;color:#0c0c0c;font-weight:bold;font-style:italic;left:346.4px;width:35.3px;overflow:hidden;-webkit-text-stroke:0.25px #0c0c0c;">W</div>
<div class="t" style="top:212.53px;line-height:12px;font-size:8.4px;color:#0c0c0c;font-weight:bold;font-style:italic;left:384.5px;width:96px;overflow:hidden;-webkit-text-stroke:0.25px #0c0c0c;">16 x 26</div>
<div class="t" style="top:212.53px;line-height:12px;font-size:8.4px;color:#0c0c0c;font-weight:bold;font-style:italic;left:482.6px;width:48.6px;overflow:hidden;-webkit-text-stroke:0.25px #0c0c0c;">29'-10 5/8</div>
<div class="t" style="top:212.53px;line-height:12px;font-size:8.4px;color:#0c0c0c;font-weight:bold;font-style:italic;left:533.7px;width:15.8px;overflow:hidden;-webkit-text-stroke:0.25px #0c0c0c;">4</div>
<div class="t" style="top:212.53px;line-height:12px;font-size:8.4px;color:#0c0c0c;font-weight:bold;font-style:italic;left:552px;width:17.5px;overflow:hidden;-webkit-text-stroke:0.25px #0c0c0c;">Unas</div>
<div class="t" style="top:212.53px;line-height:12px;font-size:8.4px;color:#0c0c0c;font-weight:bold;font-style:italic;left:572.7px;width:22.9px;overflow:hidden;-webkit-text-stroke:0.25px #0c0c0c;">B284</div>
<div class="t" style="top:212.53px;line-height:12px;font-size:8.4px;color:#0c0c0c;font-weight:bold;font-style:italic;right:215.8px;text-align:right;-webkit-text-stroke:0.25px #0c0c0c;">2.5</div>
<div style="left:107px;top:226.29px;width:527.2px;height:13.72px;background:#d3e3ef"></div>
<div style="left:142.2px;top:226.29px;width:1px;height:13.72px;background:#e3e3e6"></div>
<div style="left:163.4px;top:226.29px;width:1px;height:13.72px;background:#e3e3e6"></div>
<div style="left:206.5px;top:226.29px;width:1px;height:13.72px;background:#e3e3e6"></div>
<div style="left:228.9px;top:226.29px;width:1px;height:13.72px;background:#e3e3e6"></div>
<div style="left:264.7px;top:226.29px;width:1px;height:13.72px;background:#e3e3e6"></div>
<div style="left:300.5px;top:226.29px;width:1px;height:13.72px;background:#e3e3e6"></div>
<div style="left:344px;top:226.29px;width:1px;height:13.72px;background:#e3e3e6"></div>
<div style="left:381.7px;top:226.29px;width:1px;height:13.72px;background:#e3e3e6"></div>
<div style="left:480.5px;top:226.29px;width:1px;height:13.72px;background:#e3e3e6"></div>
<div style="left:531.2px;top:226.29px;width:1px;height:13.72px;background:#e3e3e6"></div>
<div style="left:549.5px;top:226.29px;width:1px;height:13.72px;background:#e3e3e6"></div>
<div style="left:569.5px;top:226.29px;width:1px;height:13.72px;background:#e3e3e6"></div>
<div style="left:595.6px;top:226.29px;width:1px;height:13.72px;background:#e3e3e6"></div>
<div class="t" style="top:226.25px;line-height:12px;font-size:8.4px;color:#0c0c0c;font-weight:bold;font-style:italic;left:108.7px;width:33.5px;overflow:hidden;-webkit-text-stroke:0.25px #0c0c0c;">B285</div>
<div class="t" style="top:226.25px;line-height:12px;font-size:8.4px;color:#0c0c0c;font-weight:bold;font-style:italic;right:622px;text-align:right;-webkit-text-stroke:0.25px #0c0c0c;">1</div>
<div class="t" style="top:226.25px;line-height:12px;font-size:8.4px;color:#0c0c0c;font-weight:bold;font-style:italic;left:231px;width:33.7px;overflow:hidden;-webkit-text-stroke:0.25px #0c0c0c;">B285</div>
<div class="t" style="top:226.25px;line-height:12px;font-size:8.4px;color:#0c0c0c;font-weight:bold;font-style:italic;left:267px;width:33.5px;overflow:hidden;-webkit-text-stroke:0.25px #0c0c0c;">B285</div>
<div class="t" style="top:226.25px;line-height:12px;font-size:8.4px;color:#0c0c0c;font-weight:bold;font-style:italic;left:346.4px;width:35.3px;overflow:hidden;-webkit-text-stroke:0.25px #0c0c0c;">W</div>
<div class="t" style="top:226.25px;line-height:12px;font-size:8.4px;color:#0c0c0c;font-weight:bold;font-style:italic;left:384.5px;width:96px;overflow:hidden;-webkit-text-stroke:0.25px #0c0c0c;">24 x 68</div>
<div class="t" style="top:226.25px;line-height:12px;font-size:8.4px;color:#0c0c0c;font-weight:bold;font-style:italic;left:482.6px;width:48.6px;overflow:hidden;-webkit-text-stroke:0.25px #0c0c0c;">30'-0</div>
<div class="t" style="top:226.25px;line-height:12px;font-size:8.4px;color:#0c0c0c;font-weight:bold;font-style:italic;left:533.7px;width:15.8px;overflow:hidden;-webkit-text-stroke:0.25px #0c0c0c;">4</div>
<div class="t" style="top:226.25px;line-height:12px;font-size:8.4px;color:#0c0c0c;font-weight:bold;font-style:italic;left:552px;width:17.5px;overflow:hidden;-webkit-text-stroke:0.25px #0c0c0c;">Unas</div>
<div class="t" style="top:226.25px;line-height:12px;font-size:8.4px;color:#0c0c0c;font-weight:bold;font-style:italic;left:572.7px;width:22.9px;overflow:hidden;-webkit-text-stroke:0.25px #0c0c0c;">B285</div>
<div class="t" style="top:226.25px;line-height:12px;font-size:8.4px;color:#0c0c0c;font-weight:bold;font-style:italic;right:215.8px;text-align:right;-webkit-text-stroke:0.25px #0c0c0c;">3.0</div>
<div style="left:107px;top:240px;width:527.2px;height:13.72px;background:#fdfdfd"></div>
<div style="left:142.2px;top:240px;width:1px;height:13.72px;background:#e3e3e6"></div>
<div style="left:163.4px;top:240px;width:1px;height:13.72px;background:#e3e3e6"></div>
<div style="left:206.5px;top:240px;width:1px;height:13.72px;background:#e3e3e6"></div>
<div style="left:228.9px;top:240px;width:1px;height:13.72px;background:#e3e3e6"></div>
<div style="left:264.7px;top:240px;width:1px;height:13.72px;background:#e3e3e6"></div>
<div style="left:300.5px;top:240px;width:1px;height:13.72px;background:#e3e3e6"></div>
<div style="left:344px;top:240px;width:1px;height:13.72px;background:#e3e3e6"></div>
<div style="left:381.7px;top:240px;width:1px;height:13.72px;background:#e3e3e6"></div>
<div style="left:480.5px;top:240px;width:1px;height:13.72px;background:#e3e3e6"></div>
<div style="left:531.2px;top:240px;width:1px;height:13.72px;background:#e3e3e6"></div>
<div style="left:549.5px;top:240px;width:1px;height:13.72px;background:#e3e3e6"></div>
<div style="left:569.5px;top:240px;width:1px;height:13.72px;background:#e3e3e6"></div>
<div style="left:595.6px;top:240px;width:1px;height:13.72px;background:#e3e3e6"></div>
<div class="t" style="top:239.96px;line-height:12px;font-size:8.4px;color:#0c0c0c;font-weight:bold;font-style:italic;left:108.7px;width:33.5px;overflow:hidden;-webkit-text-stroke:0.25px #0c0c0c;">B286</div>
<div class="t" style="top:239.96px;line-height:12px;font-size:8.4px;color:#0c0c0c;font-weight:bold;font-style:italic;right:622px;text-align:right;-webkit-text-stroke:0.25px #0c0c0c;">1</div>
<div class="t" style="top:239.96px;line-height:12px;font-size:8.4px;color:#0c0c0c;font-weight:bold;font-style:italic;left:231px;width:33.7px;overflow:hidden;-webkit-text-stroke:0.25px #0c0c0c;">B286</div>
<div class="t" style="top:239.96px;line-height:12px;font-size:8.4px;color:#0c0c0c;font-weight:bold;font-style:italic;left:267px;width:33.5px;overflow:hidden;-webkit-text-stroke:0.25px #0c0c0c;">B286</div>
<div class="t" style="top:239.96px;line-height:12px;font-size:8.4px;color:#0c0c0c;font-weight:bold;font-style:italic;left:346.4px;width:35.3px;overflow:hidden;-webkit-text-stroke:0.25px #0c0c0c;">W</div>
<div class="t" style="top:239.96px;line-height:12px;font-size:8.4px;color:#0c0c0c;font-weight:bold;font-style:italic;left:384.5px;width:96px;overflow:hidden;-webkit-text-stroke:0.25px #0c0c0c;">16 x 26</div>
<div class="t" style="top:239.96px;line-height:12px;font-size:8.4px;color:#0c0c0c;font-weight:bold;font-style:italic;left:482.6px;width:48.6px;overflow:hidden;-webkit-text-stroke:0.25px #0c0c0c;">19'-10 5/8</div>
<div class="t" style="top:239.96px;line-height:12px;font-size:8.4px;color:#0c0c0c;font-weight:bold;font-style:italic;left:533.7px;width:15.8px;overflow:hidden;-webkit-text-stroke:0.25px #0c0c0c;">5</div>
<div class="t" style="top:239.96px;line-height:12px;font-size:8.4px;color:#0c0c0c;font-weight:bold;font-style:italic;left:552px;width:17.5px;overflow:hidden;-webkit-text-stroke:0.25px #0c0c0c;">Unas</div>
<div class="t" style="top:239.96px;line-height:12px;font-size:8.4px;color:#0c0c0c;font-weight:bold;font-style:italic;left:572.7px;width:22.9px;overflow:hidden;-webkit-text-stroke:0.25px #0c0c0c;">B286</div>
<div class="t" style="top:239.96px;line-height:12px;font-size:8.4px;color:#0c0c0c;font-weight:bold;font-style:italic;right:215.8px;text-align:right;-webkit-text-stroke:0.25px #0c0c0c;">1.6</div>
<div style="left:107px;top:253.72px;width:527.2px;height:13.72px;background:#d3e3ef"></div>
<div style="left:142.2px;top:253.72px;width:1px;height:13.72px;background:#e3e3e6"></div>
<div style="left:163.4px;top:253.72px;width:1px;height:13.72px;background:#e3e3e6"></div>
<div style="left:206.5px;top:253.72px;width:1px;height:13.72px;background:#e3e3e6"></div>
<div style="left:228.9px;top:253.72px;width:1px;height:13.72px;background:#e3e3e6"></div>
<div style="left:264.7px;top:253.72px;width:1px;height:13.72px;background:#e3e3e6"></div>
<div style="left:300.5px;top:253.72px;width:1px;height:13.72px;background:#e3e3e6"></div>
<div style="left:344px;top:253.72px;width:1px;height:13.72px;background:#e3e3e6"></div>
<div style="left:381.7px;top:253.72px;width:1px;height:13.72px;background:#e3e3e6"></div>
<div style="left:480.5px;top:253.72px;width:1px;height:13.72px;background:#e3e3e6"></div>
<div style="left:531.2px;top:253.72px;width:1px;height:13.72px;background:#e3e3e6"></div>
<div style="left:549.5px;top:253.72px;width:1px;height:13.72px;background:#e3e3e6"></div>
<div style="left:569.5px;top:253.72px;width:1px;height:13.72px;background:#e3e3e6"></div>
<div style="left:595.6px;top:253.72px;width:1px;height:13.72px;background:#e3e3e6"></div>
<div class="t" style="top:253.68px;line-height:12px;font-size:8.4px;color:#0c0c0c;font-weight:bold;font-style:italic;left:108.7px;width:33.5px;overflow:hidden;-webkit-text-stroke:0.25px #0c0c0c;">B287</div>
<div class="t" style="top:253.68px;line-height:12px;font-size:8.4px;color:#0c0c0c;font-weight:bold;font-style:italic;right:622px;text-align:right;-webkit-text-stroke:0.25px #0c0c0c;">1</div>
<div class="t" style="top:253.68px;line-height:12px;font-size:8.4px;color:#0c0c0c;font-weight:bold;font-style:italic;left:231px;width:33.7px;overflow:hidden;-webkit-text-stroke:0.25px #0c0c0c;">B287</div>
<div class="t" style="top:253.68px;line-height:12px;font-size:8.4px;color:#0c0c0c;font-weight:bold;font-style:italic;left:267px;width:33.5px;overflow:hidden;-webkit-text-stroke:0.25px #0c0c0c;">B287</div>
<div class="t" style="top:253.68px;line-height:12px;font-size:8.4px;color:#0c0c0c;font-weight:bold;font-style:italic;left:346.4px;width:35.3px;overflow:hidden;-webkit-text-stroke:0.25px #0c0c0c;">W</div>
<div class="t" style="top:253.68px;line-height:12px;font-size:8.4px;color:#0c0c0c;font-weight:bold;font-style:italic;left:384.5px;width:96px;overflow:hidden;-webkit-text-stroke:0.25px #0c0c0c;">18 x 35</div>
<div class="t" style="top:253.68px;line-height:12px;font-size:8.4px;color:#0c0c0c;font-weight:bold;font-style:italic;left:482.6px;width:48.6px;overflow:hidden;-webkit-text-stroke:0.25px #0c0c0c;">8'-11 11/16</div>
<div class="t" style="top:253.68px;line-height:12px;font-size:8.4px;color:#0c0c0c;font-weight:bold;font-style:italic;left:533.7px;width:15.8px;overflow:hidden;-webkit-text-stroke:0.25px #0c0c0c;">3</div>
<div class="t" style="top:253.68px;line-height:12px;font-size:8.4px;color:#0c0c0c;font-weight:bold;font-style:italic;left:552px;width:17.5px;overflow:hidden;-webkit-text-stroke:0.25px #0c0c0c;">Unas</div>
<div class="t" style="top:253.68px;line-height:12px;font-size:8.4px;color:#0c0c0c;font-weight:bold;font-style:italic;right:215.8px;text-align:right;-webkit-text-stroke:0.25px #0c0c0c;">1.0</div>
<div style="left:107px;top:267.44px;width:527.2px;height:13.71px;background:#fdfdfd"></div>
<div style="left:142.2px;top:267.44px;width:1px;height:13.71px;background:#e3e3e6"></div>
<div style="left:163.4px;top:267.44px;width:1px;height:13.71px;background:#e3e3e6"></div>
<div style="left:206.5px;top:267.44px;width:1px;height:13.71px;background:#e3e3e6"></div>
<div style="left:228.9px;top:267.44px;width:1px;height:13.71px;background:#e3e3e6"></div>
<div style="left:264.7px;top:267.44px;width:1px;height:13.71px;background:#e3e3e6"></div>
<div style="left:300.5px;top:267.44px;width:1px;height:13.71px;background:#e3e3e6"></div>
<div style="left:344px;top:267.44px;width:1px;height:13.71px;background:#e3e3e6"></div>
<div style="left:381.7px;top:267.44px;width:1px;height:13.71px;background:#e3e3e6"></div>
<div style="left:480.5px;top:267.44px;width:1px;height:13.71px;background:#e3e3e6"></div>
<div style="left:531.2px;top:267.44px;width:1px;height:13.71px;background:#e3e3e6"></div>
<div style="left:549.5px;top:267.44px;width:1px;height:13.71px;background:#e3e3e6"></div>
<div style="left:569.5px;top:267.44px;width:1px;height:13.71px;background:#e3e3e6"></div>
<div style="left:595.6px;top:267.44px;width:1px;height:13.71px;background:#e3e3e6"></div>
<div class="t" style="top:267.39px;line-height:12px;font-size:8.4px;color:#0c0c0c;font-weight:bold;font-style:italic;left:108.7px;width:33.5px;overflow:hidden;-webkit-text-stroke:0.25px #0c0c0c;">B288</div>
<div class="t" style="top:267.39px;line-height:12px;font-size:8.4px;color:#0c0c0c;font-weight:bold;font-style:italic;right:622px;text-align:right;-webkit-text-stroke:0.25px #0c0c0c;">1</div>
<div class="t" style="top:267.39px;line-height:12px;font-size:8.4px;color:#0c0c0c;font-weight:bold;font-style:italic;left:231px;width:33.7px;overflow:hidden;-webkit-text-stroke:0.25px #0c0c0c;">B288</div>
<div class="t" style="top:267.39px;line-height:12px;font-size:8.4px;color:#0c0c0c;font-weight:bold;font-style:italic;left:267px;width:33.5px;overflow:hidden;-webkit-text-stroke:0.25px #0c0c0c;">B288</div>
<div class="t" style="top:267.39px;line-height:12px;font-size:8.4px;color:#0c0c0c;font-weight:bold;font-style:italic;left:346.4px;width:35.3px;overflow:hidden;-webkit-text-stroke:0.25px #0c0c0c;">W</div>
<div class="t" style="top:267.39px;line-height:12px;font-size:8.4px;color:#0c0c0c;font-weight:bold;font-style:italic;left:384.5px;width:96px;overflow:hidden;-webkit-text-stroke:0.25px #0c0c0c;">18 x 35</div>
<div class="t" style="top:267.39px;line-height:12px;font-size:8.4px;color:#0c0c0c;font-weight:bold;font-style:italic;left:482.6px;width:48.6px;overflow:hidden;-webkit-text-stroke:0.25px #0c0c0c;">9'-4 5/16</div>
<div class="t" style="top:267.39px;line-height:12px;font-size:8.4px;color:#0c0c0c;font-weight:bold;font-style:italic;left:533.7px;width:15.8px;overflow:hidden;-webkit-text-stroke:0.25px #0c0c0c;">3</div>
<div class="t" style="top:267.39px;line-height:12px;font-size:8.4px;color:#0c0c0c;font-weight:bold;font-style:italic;left:552px;width:17.5px;overflow:hidden;-webkit-text-stroke:0.25px #0c0c0c;">Unas</div>
<div class="t" style="top:267.39px;line-height:12px;font-size:8.4px;color:#0c0c0c;font-weight:bold;font-style:italic;right:215.8px;text-align:right;-webkit-text-stroke:0.25px #0c0c0c;">1.0</div>
<div style="left:107px;top:281.15px;width:527.2px;height:13.71px;background:#d3e3ef"></div>
<div style="left:142.2px;top:281.15px;width:1px;height:13.71px;background:#e3e3e6"></div>
<div style="left:163.4px;top:281.15px;width:1px;height:13.71px;background:#e3e3e6"></div>
<div style="left:206.5px;top:281.15px;width:1px;height:13.71px;background:#e3e3e6"></div>
<div style="left:228.9px;top:281.15px;width:1px;height:13.71px;background:#e3e3e6"></div>
<div style="left:264.7px;top:281.15px;width:1px;height:13.71px;background:#e3e3e6"></div>
<div style="left:300.5px;top:281.15px;width:1px;height:13.71px;background:#e3e3e6"></div>
<div style="left:344px;top:281.15px;width:1px;height:13.71px;background:#e3e3e6"></div>
<div style="left:381.7px;top:281.15px;width:1px;height:13.71px;background:#e3e3e6"></div>
<div style="left:480.5px;top:281.15px;width:1px;height:13.71px;background:#e3e3e6"></div>
<div style="left:531.2px;top:281.15px;width:1px;height:13.71px;background:#e3e3e6"></div>
<div style="left:549.5px;top:281.15px;width:1px;height:13.71px;background:#e3e3e6"></div>
<div style="left:569.5px;top:281.15px;width:1px;height:13.71px;background:#e3e3e6"></div>
<div style="left:595.6px;top:281.15px;width:1px;height:13.71px;background:#e3e3e6"></div>
<div class="t" style="top:281.11px;line-height:12px;font-size:8.4px;color:#0c0c0c;font-weight:bold;font-style:italic;left:108.7px;width:33.5px;overflow:hidden;-webkit-text-stroke:0.25px #0c0c0c;">B289</div>
<div class="t" style="top:281.11px;line-height:12px;font-size:8.4px;color:#0c0c0c;font-weight:bold;font-style:italic;right:622px;text-align:right;-webkit-text-stroke:0.25px #0c0c0c;">1</div>
<div class="t" style="top:281.11px;line-height:12px;font-size:8.4px;color:#0c0c0c;font-weight:bold;font-style:italic;left:231px;width:33.7px;overflow:hidden;-webkit-text-stroke:0.25px #0c0c0c;">B289</div>
<div class="t" style="top:281.11px;line-height:12px;font-size:8.4px;color:#0c0c0c;font-weight:bold;font-style:italic;left:267px;width:33.5px;overflow:hidden;-webkit-text-stroke:0.25px #0c0c0c;">B289</div>
<div class="t" style="top:281.11px;line-height:12px;font-size:8.4px;color:#0c0c0c;font-weight:bold;font-style:italic;left:346.4px;width:35.3px;overflow:hidden;-webkit-text-stroke:0.25px #0c0c0c;">W</div>
<div class="t" style="top:281.11px;line-height:12px;font-size:8.4px;color:#0c0c0c;font-weight:bold;font-style:italic;left:384.5px;width:96px;overflow:hidden;-webkit-text-stroke:0.25px #0c0c0c;">14 x 22</div>
<div class="t" style="top:281.11px;line-height:12px;font-size:8.4px;color:#0c0c0c;font-weight:bold;font-style:italic;left:482.6px;width:48.6px;overflow:hidden;-webkit-text-stroke:0.25px #0c0c0c;">24'-1</div>
<div class="t" style="top:281.11px;line-height:12px;font-size:8.4px;color:#0c0c0c;font-weight:bold;font-style:italic;left:533.7px;width:15.8px;overflow:hidden;-webkit-text-stroke:0.25px #0c0c0c;">3</div>
<div class="t" style="top:281.11px;line-height:12px;font-size:8.4px;color:#0c0c0c;font-weight:bold;font-style:italic;left:552px;width:17.5px;overflow:hidden;-webkit-text-stroke:0.25px #0c0c0c;">Unas</div>
<div class="t" style="top:281.11px;line-height:12px;font-size:8.4px;color:#0c0c0c;font-weight:bold;font-style:italic;right:215.8px;text-align:right;-webkit-text-stroke:0.25px #0c0c0c;">1.7</div>
<div style="left:107px;top:294.87px;width:527.2px;height:13.71px;background:#fdfdfd"></div>
<div style="left:142.2px;top:294.87px;width:1px;height:13.71px;background:#e3e3e6"></div>
<div style="left:163.4px;top:294.87px;width:1px;height:13.71px;background:#e3e3e6"></div>
<div style="left:206.5px;top:294.87px;width:1px;height:13.71px;background:#e3e3e6"></div>
<div style="left:228.9px;top:294.87px;width:1px;height:13.71px;background:#e3e3e6"></div>
<div style="left:264.7px;top:294.87px;width:1px;height:13.71px;background:#e3e3e6"></div>
<div style="left:300.5px;top:294.87px;width:1px;height:13.71px;background:#e3e3e6"></div>
<div style="left:344px;top:294.87px;width:1px;height:13.71px;background:#e3e3e6"></div>
<div style="left:381.7px;top:294.87px;width:1px;height:13.71px;background:#e3e3e6"></div>
<div style="left:480.5px;top:294.87px;width:1px;height:13.71px;background:#e3e3e6"></div>
<div style="left:531.2px;top:294.87px;width:1px;height:13.71px;background:#e3e3e6"></div>
<div style="left:549.5px;top:294.87px;width:1px;height:13.71px;background:#e3e3e6"></div>
<div style="left:569.5px;top:294.87px;width:1px;height:13.71px;background:#e3e3e6"></div>
<div style="left:595.6px;top:294.87px;width:1px;height:13.71px;background:#e3e3e6"></div>
<div class="t" style="top:294.82px;line-height:12px;font-size:8.4px;color:#0c0c0c;font-weight:bold;font-style:italic;left:108.7px;width:33.5px;overflow:hidden;-webkit-text-stroke:0.25px #0c0c0c;">B290</div>
<div class="t" style="top:294.82px;line-height:12px;font-size:8.4px;color:#0c0c0c;font-weight:bold;font-style:italic;right:622px;text-align:right;-webkit-text-stroke:0.25px #0c0c0c;">1</div>
<div class="t" style="top:294.82px;line-height:12px;font-size:8.4px;color:#0c0c0c;font-weight:bold;font-style:italic;left:231px;width:33.7px;overflow:hidden;-webkit-text-stroke:0.25px #0c0c0c;">B290</div>
<div class="t" style="top:294.82px;line-height:12px;font-size:8.4px;color:#0c0c0c;font-weight:bold;font-style:italic;left:267px;width:33.5px;overflow:hidden;-webkit-text-stroke:0.25px #0c0c0c;">B290</div>
<div class="t" style="top:294.82px;line-height:12px;font-size:8.4px;color:#0c0c0c;font-weight:bold;font-style:italic;left:346.4px;width:35.3px;overflow:hidden;-webkit-text-stroke:0.25px #0c0c0c;">W</div>
<div class="t" style="top:294.82px;line-height:12px;font-size:8.4px;color:#0c0c0c;font-weight:bold;font-style:italic;left:384.5px;width:96px;overflow:hidden;-webkit-text-stroke:0.25px #0c0c0c;">12 x 19</div>
<div class="t" style="top:294.82px;line-height:12px;font-size:8.4px;color:#0c0c0c;font-weight:bold;font-style:italic;left:482.6px;width:48.6px;overflow:hidden;-webkit-text-stroke:0.25px #0c0c0c;">13'-6 1/4</div>
<div class="t" style="top:294.82px;line-height:12px;font-size:8.4px;color:#0c0c0c;font-weight:bold;font-style:italic;left:533.7px;width:15.8px;overflow:hidden;-webkit-text-stroke:0.25px #0c0c0c;">4</div>
<div class="t" style="top:294.82px;line-height:12px;font-size:8.4px;color:#0c0c0c;font-weight:bold;font-style:italic;left:552px;width:17.5px;overflow:hidden;-webkit-text-stroke:0.25px #0c0c0c;">Unas</div>
<div class="t" style="top:294.82px;line-height:12px;font-size:8.4px;color:#0c0c0c;font-weight:bold;font-style:italic;right:215.8px;text-align:right;-webkit-text-stroke:0.25px #0c0c0c;">1.0</div>
<div style="left:107px;top:308.58px;width:527.2px;height:13.71px;background:#d3e3ef"></div>
<div style="left:142.2px;top:308.58px;width:1px;height:13.71px;background:#e3e3e6"></div>
<div style="left:163.4px;top:308.58px;width:1px;height:13.71px;background:#e3e3e6"></div>
<div style="left:206.5px;top:308.58px;width:1px;height:13.71px;background:#e3e3e6"></div>
<div style="left:228.9px;top:308.58px;width:1px;height:13.71px;background:#e3e3e6"></div>
<div style="left:264.7px;top:308.58px;width:1px;height:13.71px;background:#e3e3e6"></div>
<div style="left:300.5px;top:308.58px;width:1px;height:13.71px;background:#e3e3e6"></div>
<div style="left:344px;top:308.58px;width:1px;height:13.71px;background:#e3e3e6"></div>
<div style="left:381.7px;top:308.58px;width:1px;height:13.71px;background:#e3e3e6"></div>
<div style="left:480.5px;top:308.58px;width:1px;height:13.71px;background:#e3e3e6"></div>
<div style="left:531.2px;top:308.58px;width:1px;height:13.71px;background:#e3e3e6"></div>
<div style="left:549.5px;top:308.58px;width:1px;height:13.71px;background:#e3e3e6"></div>
<div style="left:569.5px;top:308.58px;width:1px;height:13.71px;background:#e3e3e6"></div>
<div style="left:595.6px;top:308.58px;width:1px;height:13.71px;background:#e3e3e6"></div>
<div class="t" style="top:308.54px;line-height:12px;font-size:8.4px;color:#0c0c0c;font-weight:bold;font-style:italic;left:108.7px;width:33.5px;overflow:hidden;-webkit-text-stroke:0.25px #0c0c0c;">B291</div>
<div class="t" style="top:308.54px;line-height:12px;font-size:8.4px;color:#0c0c0c;font-weight:bold;font-style:italic;right:622px;text-align:right;-webkit-text-stroke:0.25px #0c0c0c;">1</div>
<div class="t" style="top:308.54px;line-height:12px;font-size:8.4px;color:#0c0c0c;font-weight:bold;font-style:italic;left:231px;width:33.7px;overflow:hidden;-webkit-text-stroke:0.25px #0c0c0c;">B291</div>
<div class="t" style="top:308.54px;line-height:12px;font-size:8.4px;color:#0c0c0c;font-weight:bold;font-style:italic;left:267px;width:33.5px;overflow:hidden;-webkit-text-stroke:0.25px #0c0c0c;">B291</div>
<div class="t" style="top:308.54px;line-height:12px;font-size:8.4px;color:#0c0c0c;font-weight:bold;font-style:italic;left:346.4px;width:35.3px;overflow:hidden;-webkit-text-stroke:0.25px #0c0c0c;">W</div>
<div class="t" style="top:308.54px;line-height:12px;font-size:8.4px;color:#0c0c0c;font-weight:bold;font-style:italic;left:384.5px;width:96px;overflow:hidden;-webkit-text-stroke:0.25px #0c0c0c;">12 x 19</div>
<div class="t" style="top:308.54px;line-height:12px;font-size:8.4px;color:#0c0c0c;font-weight:bold;font-style:italic;left:482.6px;width:48.6px;overflow:hidden;-webkit-text-stroke:0.25px #0c0c0c;">13'-6 1/4</div>
<div class="t" style="top:308.54px;line-height:12px;font-size:8.4px;color:#0c0c0c;font-weight:bold;font-style:italic;left:533.7px;width:15.8px;overflow:hidden;-webkit-text-stroke:0.25px #0c0c0c;">4</div>
<div class="t" style="top:308.54px;line-height:12px;font-size:8.4px;color:#0c0c0c;font-weight:bold;font-style:italic;left:552px;width:17.5px;overflow:hidden;-webkit-text-stroke:0.25px #0c0c0c;">Unas</div>
<div class="t" style="top:308.54px;line-height:12px;font-size:8.4px;color:#0c0c0c;font-weight:bold;font-style:italic;right:215.8px;text-align:right;-webkit-text-stroke:0.25px #0c0c0c;">1.0</div>
<div style="left:107px;top:322.29px;width:527.2px;height:13.71px;background:#fdfdfd"></div>
<div style="left:142.2px;top:322.29px;width:1px;height:13.71px;background:#e3e3e6"></div>
<div style="left:163.4px;top:322.29px;width:1px;height:13.71px;background:#e3e3e6"></div>
<div style="left:206.5px;top:322.29px;width:1px;height:13.71px;background:#e3e3e6"></div>
<div style="left:228.9px;top:322.29px;width:1px;height:13.71px;background:#e3e3e6"></div>
<div style="left:264.7px;top:322.29px;width:1px;height:13.71px;background:#e3e3e6"></div>
<div style="left:300.5px;top:322.29px;width:1px;height:13.71px;background:#e3e3e6"></div>
<div style="left:344px;top:322.29px;width:1px;height:13.71px;background:#e3e3e6"></div>
<div style="left:381.7px;top:322.29px;width:1px;height:13.71px;background:#e3e3e6"></div>
<div style="left:480.5px;top:322.29px;width:1px;height:13.71px;background:#e3e3e6"></div>
<div style="left:531.2px;top:322.29px;width:1px;height:13.71px;background:#e3e3e6"></div>
<div style="left:549.5px;top:322.29px;width:1px;height:13.71px;background:#e3e3e6"></div>
<div style="left:569.5px;top:322.29px;width:1px;height:13.71px;background:#e3e3e6"></div>
<div style="left:595.6px;top:322.29px;width:1px;height:13.71px;background:#e3e3e6"></div>
<div class="t" style="top:322.25px;line-height:12px;font-size:8.4px;color:#0c0c0c;font-weight:bold;font-style:italic;left:108.7px;width:33.5px;overflow:hidden;-webkit-text-stroke:0.25px #0c0c0c;">B292</div>
<div class="t" style="top:322.25px;line-height:12px;font-size:8.4px;color:#0c0c0c;font-weight:bold;font-style:italic;right:622px;text-align:right;-webkit-text-stroke:0.25px #0c0c0c;">1</div>
<div class="t" style="top:322.25px;line-height:12px;font-size:8.4px;color:#0c0c0c;font-weight:bold;font-style:italic;left:231px;width:33.7px;overflow:hidden;-webkit-text-stroke:0.25px #0c0c0c;">B292</div>
<div class="t" style="top:322.25px;line-height:12px;font-size:8.4px;color:#0c0c0c;font-weight:bold;font-style:italic;left:267px;width:33.5px;overflow:hidden;-webkit-text-stroke:0.25px #0c0c0c;">B292</div>
<div class="t" style="top:322.25px;line-height:12px;font-size:8.4px;color:#0c0c0c;font-weight:bold;font-style:italic;left:346.4px;width:35.3px;overflow:hidden;-webkit-text-stroke:0.25px #0c0c0c;">W</div>
<div class="t" style="top:322.25px;line-height:12px;font-size:8.4px;color:#0c0c0c;font-weight:bold;font-style:italic;left:384.5px;width:96px;overflow:hidden;-webkit-text-stroke:0.25px #0c0c0c;">12 x 19</div>
<div class="t" style="top:322.25px;line-height:12px;font-size:8.4px;color:#0c0c0c;font-weight:bold;font-style:italic;left:482.6px;width:48.6px;overflow:hidden;-webkit-text-stroke:0.25px #0c0c0c;">13'-6 1/4</div>
<div class="t" style="top:322.25px;line-height:12px;font-size:8.4px;color:#0c0c0c;font-weight:bold;font-style:italic;left:533.7px;width:15.8px;overflow:hidden;-webkit-text-stroke:0.25px #0c0c0c;">4</div>
<div class="t" style="top:322.25px;line-height:12px;font-size:8.4px;color:#0c0c0c;font-weight:bold;font-style:italic;left:552px;width:17.5px;overflow:hidden;-webkit-text-stroke:0.25px #0c0c0c;">Unas</div>
<div class="t" style="top:322.25px;line-height:12px;font-size:8.4px;color:#0c0c0c;font-weight:bold;font-style:italic;right:215.8px;text-align:right;-webkit-text-stroke:0.25px #0c0c0c;">1.0</div>
<div style="left:107px;top:336.01px;width:527.2px;height:13.71px;background:#d3e3ef"></div>
<div style="left:142.2px;top:336.01px;width:1px;height:13.71px;background:#e3e3e6"></div>
<div style="left:163.4px;top:336.01px;width:1px;height:13.71px;background:#e3e3e6"></div>
<div style="left:206.5px;top:336.01px;width:1px;height:13.71px;background:#e3e3e6"></div>
<div style="left:228.9px;top:336.01px;width:1px;height:13.71px;background:#e3e3e6"></div>
<div style="left:264.7px;top:336.01px;width:1px;height:13.71px;background:#e3e3e6"></div>
<div style="left:300.5px;top:336.01px;width:1px;height:13.71px;background:#e3e3e6"></div>
<div style="left:344px;top:336.01px;width:1px;height:13.71px;background:#e3e3e6"></div>
<div style="left:381.7px;top:336.01px;width:1px;height:13.71px;background:#e3e3e6"></div>
<div style="left:480.5px;top:336.01px;width:1px;height:13.71px;background:#e3e3e6"></div>
<div style="left:531.2px;top:336.01px;width:1px;height:13.71px;background:#e3e3e6"></div>
<div style="left:549.5px;top:336.01px;width:1px;height:13.71px;background:#e3e3e6"></div>
<div style="left:569.5px;top:336.01px;width:1px;height:13.71px;background:#e3e3e6"></div>
<div style="left:595.6px;top:336.01px;width:1px;height:13.71px;background:#e3e3e6"></div>
<div class="t" style="top:335.97px;line-height:12px;font-size:8.4px;color:#0c0c0c;font-weight:bold;font-style:italic;left:108.7px;width:33.5px;overflow:hidden;-webkit-text-stroke:0.25px #0c0c0c;">B293</div>
<div class="t" style="top:335.97px;line-height:12px;font-size:8.4px;color:#0c0c0c;font-weight:bold;font-style:italic;right:622px;text-align:right;-webkit-text-stroke:0.25px #0c0c0c;">1</div>
<div class="t" style="top:335.97px;line-height:12px;font-size:8.4px;color:#0c0c0c;font-weight:bold;font-style:italic;left:231px;width:33.7px;overflow:hidden;-webkit-text-stroke:0.25px #0c0c0c;">B293</div>
<div class="t" style="top:335.97px;line-height:12px;font-size:8.4px;color:#0c0c0c;font-weight:bold;font-style:italic;left:267px;width:33.5px;overflow:hidden;-webkit-text-stroke:0.25px #0c0c0c;">B293</div>
<div class="t" style="top:335.97px;line-height:12px;font-size:8.4px;color:#0c0c0c;font-weight:bold;font-style:italic;left:346.4px;width:35.3px;overflow:hidden;-webkit-text-stroke:0.25px #0c0c0c;">W</div>
<div class="t" style="top:335.97px;line-height:12px;font-size:8.4px;color:#0c0c0c;font-weight:bold;font-style:italic;left:384.5px;width:96px;overflow:hidden;-webkit-text-stroke:0.25px #0c0c0c;">12 x 19</div>
<div class="t" style="top:335.97px;line-height:12px;font-size:8.4px;color:#0c0c0c;font-weight:bold;font-style:italic;left:482.6px;width:48.6px;overflow:hidden;-webkit-text-stroke:0.25px #0c0c0c;">13'-6 1/4</div>
<div class="t" style="top:335.97px;line-height:12px;font-size:8.4px;color:#0c0c0c;font-weight:bold;font-style:italic;left:533.7px;width:15.8px;overflow:hidden;-webkit-text-stroke:0.25px #0c0c0c;">4</div>
<div class="t" style="top:335.97px;line-height:12px;font-size:8.4px;color:#0c0c0c;font-weight:bold;font-style:italic;left:552px;width:17.5px;overflow:hidden;-webkit-text-stroke:0.25px #0c0c0c;">Unas</div>
<div class="t" style="top:335.97px;line-height:12px;font-size:8.4px;color:#0c0c0c;font-weight:bold;font-style:italic;right:215.8px;text-align:right;-webkit-text-stroke:0.25px #0c0c0c;">1.0</div>
<div style="left:107px;top:349.73px;width:527.2px;height:13.71px;background:#fdfdfd"></div>
<div style="left:142.2px;top:349.73px;width:1px;height:13.71px;background:#e3e3e6"></div>
<div style="left:163.4px;top:349.73px;width:1px;height:13.71px;background:#e3e3e6"></div>
<div style="left:206.5px;top:349.73px;width:1px;height:13.71px;background:#e3e3e6"></div>
<div style="left:228.9px;top:349.73px;width:1px;height:13.71px;background:#e3e3e6"></div>
<div style="left:264.7px;top:349.73px;width:1px;height:13.71px;background:#e3e3e6"></div>
<div style="left:300.5px;top:349.73px;width:1px;height:13.71px;background:#e3e3e6"></div>
<div style="left:344px;top:349.73px;width:1px;height:13.71px;background:#e3e3e6"></div>
<div style="left:381.7px;top:349.73px;width:1px;height:13.71px;background:#e3e3e6"></div>
<div style="left:480.5px;top:349.73px;width:1px;height:13.71px;background:#e3e3e6"></div>
<div style="left:531.2px;top:349.73px;width:1px;height:13.71px;background:#e3e3e6"></div>
<div style="left:549.5px;top:349.73px;width:1px;height:13.71px;background:#e3e3e6"></div>
<div style="left:569.5px;top:349.73px;width:1px;height:13.71px;background:#e3e3e6"></div>
<div style="left:595.6px;top:349.73px;width:1px;height:13.71px;background:#e3e3e6"></div>
<div class="t" style="top:349.68px;line-height:12px;font-size:8.4px;color:#0c0c0c;font-weight:bold;font-style:italic;left:108.7px;width:33.5px;overflow:hidden;-webkit-text-stroke:0.25px #0c0c0c;">B294</div>
<div class="t" style="top:349.68px;line-height:12px;font-size:8.4px;color:#0c0c0c;font-weight:bold;font-style:italic;right:622px;text-align:right;-webkit-text-stroke:0.25px #0c0c0c;">1</div>
<div class="t" style="top:349.68px;line-height:12px;font-size:8.4px;color:#0c0c0c;font-weight:bold;font-style:italic;left:231px;width:33.7px;overflow:hidden;-webkit-text-stroke:0.25px #0c0c0c;">B294</div>
<div class="t" style="top:349.68px;line-height:12px;font-size:8.4px;color:#0c0c0c;font-weight:bold;font-style:italic;left:267px;width:33.5px;overflow:hidden;-webkit-text-stroke:0.25px #0c0c0c;">B294</div>
<div class="t" style="top:349.68px;line-height:12px;font-size:8.4px;color:#0c0c0c;font-weight:bold;font-style:italic;left:346.4px;width:35.3px;overflow:hidden;-webkit-text-stroke:0.25px #0c0c0c;">W</div>
<div class="t" style="top:349.68px;line-height:12px;font-size:8.4px;color:#0c0c0c;font-weight:bold;font-style:italic;left:384.5px;width:96px;overflow:hidden;-webkit-text-stroke:0.25px #0c0c0c;">12 x 19</div>
<div class="t" style="top:349.68px;line-height:12px;font-size:8.4px;color:#0c0c0c;font-weight:bold;font-style:italic;left:482.6px;width:48.6px;overflow:hidden;-webkit-text-stroke:0.25px #0c0c0c;">13'-6 1/4</div>
<div class="t" style="top:349.68px;line-height:12px;font-size:8.4px;color:#0c0c0c;font-weight:bold;font-style:italic;left:533.7px;width:15.8px;overflow:hidden;-webkit-text-stroke:0.25px #0c0c0c;">4</div>
<div class="t" style="top:349.68px;line-height:12px;font-size:8.4px;color:#0c0c0c;font-weight:bold;font-style:italic;left:552px;width:17.5px;overflow:hidden;-webkit-text-stroke:0.25px #0c0c0c;">Unas</div>
<div class="t" style="top:349.68px;line-height:12px;font-size:8.4px;color:#0c0c0c;font-weight:bold;font-style:italic;right:215.8px;text-align:right;-webkit-text-stroke:0.25px #0c0c0c;">1.0</div>
<div style="left:107px;top:363.44px;width:527.2px;height:13.71px;background:#d3e3ef"></div>
<div style="left:142.2px;top:363.44px;width:1px;height:13.71px;background:#e3e3e6"></div>
<div style="left:163.4px;top:363.44px;width:1px;height:13.71px;background:#e3e3e6"></div>
<div style="left:206.5px;top:363.44px;width:1px;height:13.71px;background:#e3e3e6"></div>
<div style="left:228.9px;top:363.44px;width:1px;height:13.71px;background:#e3e3e6"></div>
<div style="left:264.7px;top:363.44px;width:1px;height:13.71px;background:#e3e3e6"></div>
<div style="left:300.5px;top:363.44px;width:1px;height:13.71px;background:#e3e3e6"></div>
<div style="left:344px;top:363.44px;width:1px;height:13.71px;background:#e3e3e6"></div>
<div style="left:381.7px;top:363.44px;width:1px;height:13.71px;background:#e3e3e6"></div>
<div style="left:480.5px;top:363.44px;width:1px;height:13.71px;background:#e3e3e6"></div>
<div style="left:531.2px;top:363.44px;width:1px;height:13.71px;background:#e3e3e6"></div>
<div style="left:549.5px;top:363.44px;width:1px;height:13.71px;background:#e3e3e6"></div>
<div style="left:569.5px;top:363.44px;width:1px;height:13.71px;background:#e3e3e6"></div>
<div style="left:595.6px;top:363.44px;width:1px;height:13.71px;background:#e3e3e6"></div>
<div class="t" style="top:363.4px;line-height:12px;font-size:8.4px;color:#0c0c0c;font-weight:bold;font-style:italic;left:108.7px;width:33.5px;overflow:hidden;-webkit-text-stroke:0.25px #0c0c0c;">B295</div>
<div class="t" style="top:363.4px;line-height:12px;font-size:8.4px;color:#0c0c0c;font-weight:bold;font-style:italic;right:622px;text-align:right;-webkit-text-stroke:0.25px #0c0c0c;">1</div>
<div class="t" style="top:363.4px;line-height:12px;font-size:8.4px;color:#0c0c0c;font-weight:bold;font-style:italic;left:231px;width:33.7px;overflow:hidden;-webkit-text-stroke:0.25px #0c0c0c;">B295</div>
<div class="t" style="top:363.4px;line-height:12px;font-size:8.4px;color:#0c0c0c;font-weight:bold;font-style:italic;left:267px;width:33.5px;overflow:hidden;-webkit-text-stroke:0.25px #0c0c0c;">B295</div>
<div class="t" style="top:363.4px;line-height:12px;font-size:8.4px;color:#0c0c0c;font-weight:bold;font-style:italic;left:346.4px;width:35.3px;overflow:hidden;-webkit-text-stroke:0.25px #0c0c0c;">W</div>
<div class="t" style="top:363.4px;line-height:12px;font-size:8.4px;color:#0c0c0c;font-weight:bold;font-style:italic;left:384.5px;width:96px;overflow:hidden;-webkit-text-stroke:0.25px #0c0c0c;">12 x 19</div>
<div class="t" style="top:363.4px;line-height:12px;font-size:8.4px;color:#0c0c0c;font-weight:bold;font-style:italic;left:482.6px;width:48.6px;overflow:hidden;-webkit-text-stroke:0.25px #0c0c0c;">13'-6 1/4</div>
<div class="t" style="top:363.4px;line-height:12px;font-size:8.4px;color:#0c0c0c;font-weight:bold;font-style:italic;left:533.7px;width:15.8px;overflow:hidden;-webkit-text-stroke:0.25px #0c0c0c;">4</div>
<div class="t" style="top:363.4px;line-height:12px;font-size:8.4px;color:#0c0c0c;font-weight:bold;font-style:italic;left:552px;width:17.5px;overflow:hidden;-webkit-text-stroke:0.25px #0c0c0c;">Unas</div>
<div class="t" style="top:363.4px;line-height:12px;font-size:8.4px;color:#0c0c0c;font-weight:bold;font-style:italic;right:215.8px;text-align:right;-webkit-text-stroke:0.25px #0c0c0c;">1.0</div>
<div style="left:107px;top:377.15px;width:527.2px;height:13.71px;background:#fdfdfd"></div>
<div style="left:142.2px;top:377.15px;width:1px;height:13.71px;background:#e3e3e6"></div>
<div style="left:163.4px;top:377.15px;width:1px;height:13.71px;background:#e3e3e6"></div>
<div style="left:206.5px;top:377.15px;width:1px;height:13.71px;background:#e3e3e6"></div>
<div style="left:228.9px;top:377.15px;width:1px;height:13.71px;background:#e3e3e6"></div>
<div style="left:264.7px;top:377.15px;width:1px;height:13.71px;background:#e3e3e6"></div>
<div style="left:300.5px;top:377.15px;width:1px;height:13.71px;background:#e3e3e6"></div>
<div style="left:344px;top:377.15px;width:1px;height:13.71px;background:#e3e3e6"></div>
<div style="left:381.7px;top:377.15px;width:1px;height:13.71px;background:#e3e3e6"></div>
<div style="left:480.5px;top:377.15px;width:1px;height:13.71px;background:#e3e3e6"></div>
<div style="left:531.2px;top:377.15px;width:1px;height:13.71px;background:#e3e3e6"></div>
<div style="left:549.5px;top:377.15px;width:1px;height:13.71px;background:#e3e3e6"></div>
<div style="left:569.5px;top:377.15px;width:1px;height:13.71px;background:#e3e3e6"></div>
<div style="left:595.6px;top:377.15px;width:1px;height:13.71px;background:#e3e3e6"></div>
<div class="t" style="top:377.11px;line-height:12px;font-size:8.4px;color:#0c0c0c;font-weight:bold;font-style:italic;left:108.7px;width:33.5px;overflow:hidden;-webkit-text-stroke:0.25px #0c0c0c;">B296</div>
<div class="t" style="top:377.11px;line-height:12px;font-size:8.4px;color:#0c0c0c;font-weight:bold;font-style:italic;right:622px;text-align:right;-webkit-text-stroke:0.25px #0c0c0c;">1</div>
<div class="t" style="top:377.11px;line-height:12px;font-size:8.4px;color:#0c0c0c;font-weight:bold;font-style:italic;left:231px;width:33.7px;overflow:hidden;-webkit-text-stroke:0.25px #0c0c0c;">B296</div>
<div class="t" style="top:377.11px;line-height:12px;font-size:8.4px;color:#0c0c0c;font-weight:bold;font-style:italic;left:267px;width:33.5px;overflow:hidden;-webkit-text-stroke:0.25px #0c0c0c;">B296</div>
<div class="t" style="top:377.11px;line-height:12px;font-size:8.4px;color:#0c0c0c;font-weight:bold;font-style:italic;left:346.4px;width:35.3px;overflow:hidden;-webkit-text-stroke:0.25px #0c0c0c;">W</div>
<div class="t" style="top:377.11px;line-height:12px;font-size:8.4px;color:#0c0c0c;font-weight:bold;font-style:italic;left:384.5px;width:96px;overflow:hidden;-webkit-text-stroke:0.25px #0c0c0c;">12 x 19</div>
<div class="t" style="top:377.11px;line-height:12px;font-size:8.4px;color:#0c0c0c;font-weight:bold;font-style:italic;left:482.6px;width:48.6px;overflow:hidden;-webkit-text-stroke:0.25px #0c0c0c;">13'-6 1/4</div>
<div class="t" style="top:377.11px;line-height:12px;font-size:8.4px;color:#0c0c0c;font-weight:bold;font-style:italic;left:533.7px;width:15.8px;overflow:hidden;-webkit-text-stroke:0.25px #0c0c0c;">4</div>
<div class="t" style="top:377.11px;line-height:12px;font-size:8.4px;color:#0c0c0c;font-weight:bold;font-style:italic;left:552px;width:17.5px;overflow:hidden;-webkit-text-stroke:0.25px #0c0c0c;">Unas</div>
<div class="t" style="top:377.11px;line-height:12px;font-size:8.4px;color:#0c0c0c;font-weight:bold;font-style:italic;right:215.8px;text-align:right;-webkit-text-stroke:0.25px #0c0c0c;">1.0</div>
<div style="left:107px;top:390.87px;width:527.2px;height:13.71px;background:#d3e3ef"></div>
<div style="left:142.2px;top:390.87px;width:1px;height:13.71px;background:#e3e3e6"></div>
<div style="left:163.4px;top:390.87px;width:1px;height:13.71px;background:#e3e3e6"></div>
<div style="left:206.5px;top:390.87px;width:1px;height:13.71px;background:#e3e3e6"></div>
<div style="left:228.9px;top:390.87px;width:1px;height:13.71px;background:#e3e3e6"></div>
<div style="left:264.7px;top:390.87px;width:1px;height:13.71px;background:#e3e3e6"></div>
<div style="left:300.5px;top:390.87px;width:1px;height:13.71px;background:#e3e3e6"></div>
<div style="left:344px;top:390.87px;width:1px;height:13.71px;background:#e3e3e6"></div>
<div style="left:381.7px;top:390.87px;width:1px;height:13.71px;background:#e3e3e6"></div>
<div style="left:480.5px;top:390.87px;width:1px;height:13.71px;background:#e3e3e6"></div>
<div style="left:531.2px;top:390.87px;width:1px;height:13.71px;background:#e3e3e6"></div>
<div style="left:549.5px;top:390.87px;width:1px;height:13.71px;background:#e3e3e6"></div>
<div style="left:569.5px;top:390.87px;width:1px;height:13.71px;background:#e3e3e6"></div>
<div style="left:595.6px;top:390.87px;width:1px;height:13.71px;background:#e3e3e6"></div>
<div class="t" style="top:390.83px;line-height:12px;font-size:8.4px;color:#0c0c0c;font-weight:bold;font-style:italic;left:108.7px;width:33.5px;overflow:hidden;-webkit-text-stroke:0.25px #0c0c0c;">B297</div>
<div class="t" style="top:390.83px;line-height:12px;font-size:8.4px;color:#0c0c0c;font-weight:bold;font-style:italic;right:622px;text-align:right;-webkit-text-stroke:0.25px #0c0c0c;">1</div>
<div class="t" style="top:390.83px;line-height:12px;font-size:8.4px;color:#0c0c0c;font-weight:bold;font-style:italic;left:231px;width:33.7px;overflow:hidden;-webkit-text-stroke:0.25px #0c0c0c;">B297</div>
<div class="t" style="top:390.83px;line-height:12px;font-size:8.4px;color:#0c0c0c;font-weight:bold;font-style:italic;left:267px;width:33.5px;overflow:hidden;-webkit-text-stroke:0.25px #0c0c0c;">B297</div>
<div class="t" style="top:390.83px;line-height:12px;font-size:8.4px;color:#0c0c0c;font-weight:bold;font-style:italic;left:346.4px;width:35.3px;overflow:hidden;-webkit-text-stroke:0.25px #0c0c0c;">W</div>
<div class="t" style="top:390.83px;line-height:12px;font-size:8.4px;color:#0c0c0c;font-weight:bold;font-style:italic;left:384.5px;width:96px;overflow:hidden;-webkit-text-stroke:0.25px #0c0c0c;">30 x 90</div>
<div class="t" style="top:390.83px;line-height:12px;font-size:8.4px;color:#0c0c0c;font-weight:bold;font-style:italic;left:482.6px;width:48.6px;overflow:hidden;-webkit-text-stroke:0.25px #0c0c0c;">47'-0 3/16</div>
<div class="t" style="top:390.83px;line-height:12px;font-size:8.4px;color:#0c0c0c;font-weight:bold;font-style:italic;left:533.7px;width:15.8px;overflow:hidden;-webkit-text-stroke:0.25px #0c0c0c;">3</div>
<div class="t" style="top:390.83px;line-height:12px;font-size:8.4px;color:#0c0c0c;font-weight:bold;font-style:italic;left:552px;width:17.5px;overflow:hidden;-webkit-text-stroke:0.25px #0c0c0c;">Unas</div>
<div class="t" style="top:390.83px;line-height:12px;font-size:8.4px;color:#0c0c0c;font-weight:bold;font-style:italic;right:215.8px;text-align:right;-webkit-text-stroke:0.25px #0c0c0c;">3.0</div>
<div style="left:107px;top:404.58px;width:527.2px;height:11.22px;background:#fdfdfd"></div>
<div style="left:142.2px;top:404.58px;width:1px;height:11.22px;background:#e3e3e6"></div>
<div style="left:163.4px;top:404.58px;width:1px;height:11.22px;background:#e3e3e6"></div>
<div style="left:206.5px;top:404.58px;width:1px;height:11.22px;background:#e3e3e6"></div>
<div style="left:228.9px;top:404.58px;width:1px;height:11.22px;background:#e3e3e6"></div>
<div style="left:264.7px;top:404.58px;width:1px;height:11.22px;background:#e3e3e6"></div>
<div style="left:300.5px;top:404.58px;width:1px;height:11.22px;background:#e3e3e6"></div>
<div style="left:344px;top:404.58px;width:1px;height:11.22px;background:#e3e3e6"></div>
<div style="left:381.7px;top:404.58px;width:1px;height:11.22px;background:#e3e3e6"></div>
<div style="left:480.5px;top:404.58px;width:1px;height:11.22px;background:#e3e3e6"></div>
<div style="left:531.2px;top:404.58px;width:1px;height:11.22px;background:#e3e3e6"></div>
<div style="left:549.5px;top:404.58px;width:1px;height:11.22px;background:#e3e3e6"></div>
<div style="left:569.5px;top:404.58px;width:1px;height:11.22px;background:#e3e3e6"></div>
<div style="left:595.6px;top:404.58px;width:1px;height:11.22px;background:#e3e3e6"></div>
<div class="t" style="top:404.54px;line-height:12px;font-size:8.4px;color:#0c0c0c;font-weight:bold;font-style:italic;left:108.7px;width:33.5px;overflow:hidden;-webkit-text-stroke:0.25px #0c0c0c;">B298</div>
<div class="t" style="top:404.54px;line-height:12px;font-size:8.4px;color:#0c0c0c;font-weight:bold;font-style:italic;right:622px;text-align:right;-webkit-text-stroke:0.25px #0c0c0c;">4</div>
<div class="t" style="top:404.54px;line-height:12px;font-size:8.4px;color:#0c0c0c;font-weight:bold;font-style:italic;left:231px;width:33.7px;overflow:hidden;-webkit-text-stroke:0.25px #0c0c0c;">B298</div>
<div class="t" style="top:404.54px;line-height:12px;font-size:8.4px;color:#0c0c0c;font-weight:bold;font-style:italic;left:267px;width:33.5px;overflow:hidden;-webkit-text-stroke:0.25px #0c0c0c;">B298</div>
<div class="t" style="top:404.54px;line-height:12px;font-size:8.4px;color:#0c0c0c;font-weight:bold;font-style:italic;left:346.4px;width:35.3px;overflow:hidden;-webkit-text-stroke:0.25px #0c0c0c;">W</div>
<div class="t" style="top:404.54px;line-height:12px;font-size:8.4px;color:#0c0c0c;font-weight:bold;font-style:italic;left:384.5px;width:96px;overflow:hidden;-webkit-text-stroke:0.25px #0c0c0c;">8 x 10</div>
<div class="t" style="top:404.54px;line-height:12px;font-size:8.4px;color:#0c0c0c;font-weight:bold;font-style:italic;left:482.6px;width:48.6px;overflow:hidden;-webkit-text-stroke:0.25px #0c0c0c;">9'-1 3/16</div>
<div class="t" style="top:404.54px;line-height:12px;font-size:8.4px;color:#0c0c0c;font-weight:bold;font-style:italic;left:533.7px;width:15.8px;overflow:hidden;-webkit-text-stroke:0.25px #0c0c0c;">4</div>
<div class="t" style="top:404.54px;line-height:12px;font-size:8.4px;color:#0c0c0c;font-weight:bold;font-style:italic;left:552px;width:17.5px;overflow:hidden;-webkit-text-stroke:0.25px #0c0c0c;">Unas</div>
<div class="t" style="top:404.54px;line-height:12px;font-size:8.4px;color:#0c0c0c;font-weight:bold;font-style:italic;right:215.8px;text-align:right;-webkit-text-stroke:0.25px #0c0c0c;">1.1</div>
<div style="left:634.2px;top:131px;width:10.8px;height:284.8px;background:#f0f0f0"></div>
<div style="left:634.2px;top:131px;width:10.8px;height:11px;background:#dadade"></div>
<svg style="position:absolute;left:636.5px;top:134px" width="6" height="4" viewBox="0 0 6 4"><path d="M0.5 3.5 L3 0.5 L5.5 3.5 Z" fill="#555"/></svg>
<div style="left:107px;top:415.8px;width:527.2px;height:9.2px;background:#f0f0f0"></div>
<div style="left:107px;top:415.8px;width:22px;height:9.2px;background:#d4d4d8"></div>
<svg style="position:absolute;left:110px;top:418px" width="4" height="6" viewBox="0 0 4 6"><path d="M3.5 0.5 L0.5 3 L3.5 5.5 Z" fill="#555"/></svg>
<div style="left:622.7px;top:415.8px;width:11.5px;height:9.2px;background:#d4d4d8"></div>
<svg style="position:absolute;left:626.5px;top:418px" width="4" height="6" viewBox="0 0 4 6"><path d="M0.5 0.5 L3.5 3 L0.5 5.5 Z" fill="#555"/></svg>
<div style="left:634.2px;top:415.8px;width:10.8px;height:9.2px;background:#d4d4d8"></div>
<svg style="position:absolute;left:637px;top:420px" width="6" height="4" viewBox="0 0 6 4"><path d="M0.5 0.5 L3 3.5 L5.5 0.5 Z" fill="#555"/></svg>
<div style="left:106.7px;top:426.8px;width:129.6px;height:15.2px;background:#1c7bba"></div>
<div class="t" style="top:428.2px;line-height:12px;font-size:8.8px;color:#f2f6fa;left:106.7px;width:129.6px;text-align:center;">New (F1)</div>
<div style="left:242.4px;top:426.8px;width:130.9px;height:15.2px;background:#1c7bba"></div>
<div class="t" style="top:428.2px;line-height:12px;font-size:8.8px;color:#f2f6fa;left:242.4px;width:130.9px;text-align:center;">Save (F4)</div>
<div style="left:379px;top:426.8px;width:130.4px;height:15.2px;background:#1c7bba"></div>
<div class="t" style="top:428.2px;line-height:12px;font-size:8.8px;color:#f2f6fa;left:379px;width:130.4px;text-align:center;">Copy (F3)</div>
<div style="left:515.1px;top:426.8px;width:129.6px;height:15.2px;background:#1c7bba"></div>
<div class="t" style="top:428.2px;line-height:12px;font-size:8.8px;color:#f2f6fa;left:515.1px;width:129.6px;text-align:center;">Delete (F2)</div>
<div style="left:646px;top:131px;width:199px;height:0.8px;background:#e2e2e6"></div>
<div class="t" style="top:134.7px;line-height:12px;font-size:8.6px;color:#333;left:647.9px;">Main Mark:</div>
<div style="left:648.3px;top:147.4px;width:86.3px;height:14px;background:#fff;border:1px solid #bdbdc2;box-sizing:border-box"></div>
<div style="left:723.7px;top:147.4px;width:10.9px;height:14px;background:#1c7bba"></div>
<svg style="position:absolute;left:726.65px;top:153.4px" width="5" height="3" viewBox="0 0 5 3"><path d="M0.5 0.3 L2.5 2.6 L4.5 0.3 Z" fill="#fff"/></svg>
<div class="t" style="top:147.9px;line-height:12px;font-size:8.4px;color:#1a1a1a;left:649.8px;">B282</div>
<div class="t" style="top:134.7px;line-height:12px;font-size:8.6px;color:#333;left:738.2px;">Piece Mark:</div>
<div style="left:738.2px;top:147.4px;width:70.6px;height:14px;background:#fff;border:1px solid #bdbdc2;box-sizing:border-box"></div>
<div class="t" style="top:147.9px;line-height:12px;font-size:8.4px;color:#1a1a1a;left:739.7px;">B282</div>
<div style="left:814.3px;top:134.1px;width:11.8px;height:8.9px;background:#1c7bba"></div>
<div class="t" style="top:133px;line-height:12px;font-size:6.6px;color:#fff;font-weight:bold;left:814.3px;width:11.8px;text-align:center;">&lt;&lt;</div>
<div class="t" style="top:163.7px;line-height:12px;font-size:8.6px;color:#333;left:647.9px;">Drawing Number:</div>
<div style="left:648.3px;top:176px;width:124.4px;height:13.6px;background:#fff;border:1px solid #bdbdc2;box-sizing:border-box"></div>
<div style="left:761.4px;top:176px;width:11.3px;height:13.6px;background:#1c7bba"></div>
<svg style="position:absolute;left:764.55px;top:181.8px" width="5" height="3" viewBox="0 0 5 3"><path d="M0.5 0.3 L2.5 2.6 L4.5 0.3 Z" fill="#fff"/></svg>
<div class="t" style="top:176.3px;line-height:12px;font-size:8.4px;color:#1a1a1a;left:649.8px;">B282</div>
<div class="t" style="top:163.7px;line-height:12px;font-size:8.6px;color:#333;left:775.8px;">Quantity:</div>
<div style="left:776.3px;top:176px;width:47.9px;height:14px;background:#fff;border:1px solid #bdbdc2;box-sizing:border-box"></div>
<div class="t" style="top:176.5px;line-height:12px;font-size:8.4px;color:#1a1a1a;left:777.8px;">1</div>
<div class="t" style="top:192.6px;line-height:12px;font-size:8.6px;color:#333;left:648px;">Shape:</div>
<div style="left:648.2px;top:204.9px;width:47.5px;height:13.8px;background:#fff;border:1px solid #bdbdc2;box-sizing:border-box"></div>
<div style="left:684.4px;top:204.9px;width:11.3px;height:13.8px;background:#1c7bba"></div>
<svg style="position:absolute;left:687.55px;top:210.8px" width="5" height="3" viewBox="0 0 5 3"><path d="M0.5 0.3 L2.5 2.6 L4.5 0.3 Z" fill="#fff"/></svg>
<div class="t" style="top:205.3px;line-height:12px;font-size:8.4px;color:#1a1a1a;left:649.7px;">W</div>
<div class="t" style="top:206.5px;line-height:12px;font-size:8.6px;color:#333;left:699.3px;">Wideflange Beams</div>
<div class="t" style="top:220.9px;line-height:12px;font-size:8.6px;color:#333;left:648px;">Dimensions:</div>
<div style="left:648.2px;top:233.1px;width:175.7px;height:14.2px;background:#fff;border:1px solid #bdbdc2;box-sizing:border-box"></div>
<div class="t" style="top:233.7px;line-height:12px;font-size:8.4px;color:#1a1a1a;left:649.7px;">W 8 x 28</div>
<div class="t" style="top:250px;line-height:12px;font-size:8.6px;color:#333;left:648px;">Length:</div>
<div style="left:648.2px;top:262.6px;width:23.6px;height:13.8px;background:#fff;border:1px solid #bdbdc2;box-sizing:border-box"></div>
<div class="t" style="top:263px;line-height:12px;font-size:8.4px;color:#1a1a1a;left:649.7px;">6</div>
<div class="t" style="top:259px;line-height:12px;font-size:7px;color:#555;left:673px;">'</div>
<div style="left:679.2px;top:262.6px;width:16px;height:13.8px;background:#fff;border:1px solid #bdbdc2;box-sizing:border-box"></div>
<div class="t" style="top:263px;line-height:12px;font-size:8.4px;color:#1a1a1a;left:680.7px;">7</div>
<div style="left:698.4px;top:262.6px;width:15.8px;height:13.8px;background:#fff;border:1px solid #bdbdc2;box-sizing:border-box"></div>
<div class="t" style="top:263px;line-height:12px;font-size:8.4px;color:#1a1a1a;left:699.9px;">11</div>
<div class="t" style="top:264px;line-height:12px;font-size:8.6px;color:#333;left:715.8px;">/16</div>
<div class="t" style="top:250px;line-height:12px;font-size:8.6px;color:#333;left:734.5px;">Grade:</div>
<div style="left:734.5px;top:262.6px;width:89.4px;height:13.8px;background:#fff;border:1px solid #bdbdc2;box-sizing:border-box"></div>
<div style="left:812.6px;top:262.6px;width:11.3px;height:13.8px;background:#1c7bba"></div>
<svg style="position:absolute;left:815.75px;top:268.5px" width="5" height="3" viewBox="0 0 5 3"><path d="M0.5 0.3 L2.5 2.6 L4.5 0.3 Z" fill="#fff"/></svg>
<div class="t" style="top:263px;line-height:12px;font-size:8.4px;color:#1a1a1a;left:736px;">A992</div>
<div class="t" style="top:278.2px;line-height:12px;font-size:8.6px;color:#333;left:648px;">Finish:</div>
<div class="t" style="top:278.5px;line-height:12px;font-size:8.6px;color:#333;left:737.2px;">Route:</div>
<div style="left:646px;top:286px;width:188px;height:14.5px;overflow:hidden">
<div style="left:2.2px;top:5.3px;width:85.9px;height:13.7px;background:#fff;border:1px solid #bdbdc2;box-sizing:border-box"></div>
<div style="left:77px;top:5.3px;width:11.1px;height:13.7px;background:#1c7bba"></div>
<div class="t" style="left:4.2px;top:6.45px;line-height:12px;font-size:8.8px;color:#222">Painted</div>
<div style="left:91.2px;top:5.3px;width:86.7px;height:13.7px;background:#fff;border:1px solid #bdbdc2;box-sizing:border-box"></div>
<div style="left:166.6px;top:5.3px;width:11.3px;height:13.7px;background:#1c7bba"></div>
<div class="t" style="left:93.2px;top:6.45px;line-height:12px;font-size:8.8px;color:#222">SP</div>
</div>
<div style="left:834.4px;top:133.5px;width:10.6px;height:167px;background:#ececf0"></div>
<div style="left:834.4px;top:133.5px;width:10.6px;height:94px;background:#cfcfd4"></div>
<svg style="position:absolute;left:837px;top:137px" width="6" height="4" viewBox="0 0 6 4"><path d="M0.5 3.5 L3 0.5 L5.5 3.5 Z" fill="#444"/></svg>
<div style="left:834.4px;top:289px;width:10.6px;height:11.5px;background:#d4d4d8"></div>
<svg style="position:absolute;left:837px;top:292.5px" width="6" height="4" viewBox="0 0 6 4"><path d="M0.5 0.5 L3 3.5 L5.5 0.5 Z" fill="#444"/></svg>
<div style="left:646px;top:305px;width:199px;height:17.5px;background:#d5d5da"></div>
<svg style="position:absolute;left:655px;top:310.5px" width="7" height="5" viewBox="0 0 7 5"><path d="M0.7 4 L3.5 1.2 L6.3 4" stroke="#222" stroke-width="1.1" fill="none"/></svg>
<svg style="position:absolute;left:664px;top:308px" width="11" height="11" viewBox="0 0 11 11"><rect x="0.6" y="0.5" width="7" height="8.8" fill="#fbfbff" stroke="#aab4d4" stroke-width="0.9"/><path d="M3.6 9.4 L8.8 4 L10.4 5.5 L5.2 10.8 Z" fill="#e8a832" stroke="#9a6a20" stroke-width="0.5"/><path d="M3.6 9.4 L5.2 10.8 L3.2 10.9 Z" fill="#6a7a9a"/></svg>
<div class="t" style="top:307px;line-height:12px;font-size:8.55px;color:#1a1a1a;font-weight:bold;left:677.3px;">Sequences &amp; Tracking</div>
<div style="left:655.7px;top:326px;width:92.3px;height:86.5px;background:#f1f1f6;border-left:1.2px solid #8a8a8e;border-top:1.2px solid #8a8a8e;border-bottom:1px solid #e2e2e6;box-sizing:border-box"></div>
<div style="left:656.9px;top:327px;width:81.6px;height:13.5px;background:#d6d6da"></div>
<div style="left:707.7px;top:327px;width:1px;height:13.5px;background:#c2c2c6"></div>
<div class="t" style="top:327.7px;line-height:12px;font-size:8.6px;color:#222;left:660px;">Sequence</div>
<svg style="position:absolute;left:701px;top:330.5px" width="6" height="6" viewBox="0 0 6 6"><path d="M0.5 0.5 L5.5 5.5 L0.5 5.5 Z" fill="#9a9a9a"/></svg>
<div class="t" style="top:327.7px;line-height:12px;font-size:8.6px;color:#222;right:114.1px;text-align:right;">Qty</div>
<div style="left:656.9px;top:340.5px;width:81.6px;height:13.3px;background:#0a96d9"></div>
<div style="left:707.7px;top:340.5px;width:0.8px;height:13.3px;background:#7cc4ea"></div>
<div style="left:656.9px;top:352.8px;width:81.6px;height:1px;background:#2a4a66"></div>
<div class="t" style="top:340.8px;line-height:12px;font-size:8.6px;color:#fff;left:658.8px;">3</div>
<div class="t" style="top:340.8px;line-height:12px;font-size:8.6px;color:#fff;right:113px;text-align:right;">1</div>
<svg style="position:absolute;left:741px;top:330px" width="5" height="4" viewBox="0 0 5 4"><path d="M0.5 3.5 L2.5 0.5 L4.5 3.5 Z" fill="#b8b8bc"/></svg>
<svg style="position:absolute;left:741px;top:407.5px" width="5" height="4" viewBox="0 0 5 4"><path d="M0.5 0.5 L2.5 3.5 L4.5 0.5 Z" fill="#b8b8bc"/></svg>
<div class="t" style="top:326px;line-height:12px;font-size:8.8px;color:#222;right:32.2px;text-align:right;">REQ:</div>
<div class="t" style="top:326px;line-height:12px;font-size:8.8px;color:#222;right:14.7px;text-align:right;">1/1</div>
<div class="t" style="top:339px;line-height:12px;font-size:8.8px;color:#222;right:32.2px;text-align:right;">INV:</div>
<div class="t" style="top:339px;line-height:12px;font-size:8.8px;color:#222;right:14.7px;text-align:right;">0/1</div>
<div class="t" style="top:351.7px;line-height:12px;font-size:8.8px;color:#222;right:32.2px;text-align:right;">TFS:</div>
<div class="t" style="top:351.7px;line-height:12px;font-size:8.8px;color:#222;right:14.7px;text-align:right;">0/1</div>
<div style="left:750.8px;top:366.2px;width:84.3px;height:12.9px;background:#1c7bba"></div>
<div class="t" style="top:366.85px;line-height:12px;font-size:8.8px;color:#f2f6fa;left:750.8px;width:84.3px;text-align:center;">Links</div>
<div style="left:750.8px;top:382.6px;width:84.3px;height:13.8px;background:#1c7bba"></div>
<div class="t" style="top:383.7px;line-height:12px;font-size:8.8px;color:#f2f6fa;left:750.8px;width:84.3px;text-align:center;">Piece Tracking</div>
<div style="left:750.8px;top:398.5px;width:84.3px;height:14.3px;background:#1c7bba"></div>
<div class="t" style="top:399.85px;line-height:12px;font-size:8.8px;color:#f2f6fa;left:750.8px;width:84.3px;text-align:center;">Loads: 0/1</div>
<div style="left:750.8px;top:414.8px;width:84.3px;height:14.3px;background:#1c7bba"></div>
<div class="t" style="top:416.15px;line-height:12px;font-size:8.8px;color:#f2f6fa;left:750.8px;width:84.3px;text-align:center;">Production Status</div>
<div style="left:656.1px;top:414.4px;width:93.2px;height:15.4px;background:#1c7bba"></div>
<div class="t" style="top:416.3px;line-height:12px;font-size:8.8px;color:#f2f6fa;left:656.1px;width:93.2px;text-align:center;">Edit Sequences (F6)</div>
<div style="left:747.8px;top:322.5px;width:91.3px;height:60.1px;border:3.4px solid #f3b41b;box-sizing:border-box"></div>
<div style="left:10.8px;top:285.8px;width:631.7px;height:112.2px;background:#f3b41b"></div>
<div style="left:14px;top:289.2px;width:625.2px;height:105.6px;background:#03447f"></div>
<div style="left:14.6px;top:306.4px;width:623.6px;height:87.4px;background:#f1f1f6"></div>
<div style="left:14.6px;top:306.4px;width:623.6px;height:1px;background:#fcfcfe"></div>
<div style="left:14.6px;top:392.8px;width:623.6px;height:1px;background:#fcfcfe"></div>
<div style="left:14.6px;top:393.8px;width:624.6px;height:1px;background:#4a6e92"></div>
<svg style="position:absolute;left:15.9px;top:291.5px" width="10.2" height="10.2" viewBox="0 0 11 11"><rect x="0" y="0" width="11" height="9" fill="#f6f8fa"/><path d="M1.4 3.6 L3.2 2.4 L5.2 3.1 L4.9 5.8 L3.7 7.9 L2.5 7.2 L1.5 5.4 Z" fill="#1f6fb8"/><path d="M5.8 2.3 L10 1.9 L9.4 4.8 L7.2 6.1 L5.7 4.6 Z" fill="#1a5fa8"/><rect x="0" y="9" width="11" height="1.6" fill="#4a2626"/></svg>
<div class="t" style="top:291px;line-height:12px;font-size:8.6px;color:#e6ecf3;left:29.5px;">Links</div>
<div style="left:591.3px;top:296.6px;width:6.7px;height:1.3px;background:#d8ad2e"></div>
<svg style="position:absolute;left:622.5px;top:293.6px" width="7.2" height="7" viewBox="0 0 8 8"><path d="M0.8 0.8 L7.2 7.2 M7.2 0.8 L0.8 7.2" stroke="#e2b526" stroke-width="1.6"/></svg>
<div style="left:22.7px;top:314.9px;width:605.9px;height:49.6px;background:#f1f1f6;border-left:1.3px solid #8a8a8e;border-top:1.3px solid #8a8a8e;border-bottom:1px solid #e0e0e4;border-right:1px solid #e8e8ec;box-sizing:border-box"></div>
<div style="left:24px;top:316.2px;width:594.5px;height:13.2px;background:#d6d6da"></div>
<div style="left:104px;top:316.2px;width:1px;height:13.2px;background:#c2c2c6"></div>
<div style="left:105px;top:316.2px;width:0.7px;height:13.2px;background:#e6e6ea"></div>
<div style="left:146.9px;top:316.2px;width:1px;height:13.2px;background:#c2c2c6"></div>
<div style="left:147.9px;top:316.2px;width:0.7px;height:13.2px;background:#e6e6ea"></div>
<div style="left:168.9px;top:316.2px;width:1px;height:13.2px;background:#c2c2c6"></div>
<div style="left:169.9px;top:316.2px;width:0.7px;height:13.2px;background:#e6e6ea"></div>
<div style="left:196.7px;top:316.2px;width:1px;height:13.2px;background:#c2c2c6"></div>
<div style="left:197.7px;top:316.2px;width:0.7px;height:13.2px;background:#e6e6ea"></div>
<div style="left:241.3px;top:316.2px;width:1px;height:13.2px;background:#c2c2c6"></div>
<div style="left:242.3px;top:316.2px;width:0.7px;height:13.2px;background:#e6e6ea"></div>
<div style="left:279.2px;top:316.2px;width:1px;height:13.2px;background:#c2c2c6"></div>
<div style="left:280.2px;top:316.2px;width:0.7px;height:13.2px;background:#e6e6ea"></div>
<div style="left:311.7px;top:316.2px;width:1px;height:13.2px;background:#c2c2c6"></div>
<div style="left:312.7px;top:316.2px;width:0.7px;height:13.2px;background:#e6e6ea"></div>
<div style="left:386.2px;top:316.2px;width:1px;height:13.2px;background:#c2c2c6"></div>
<div style="left:387.2px;top:316.2px;width:0.7px;height:13.2px;background:#e6e6ea"></div>
<div style="left:428.6px;top:316.2px;width:1px;height:13.2px;background:#c2c2c6"></div>
<div style="left:429.6px;top:316.2px;width:0.7px;height:13.2px;background:#e6e6ea"></div>
<div style="left:468.4px;top:316.2px;width:1px;height:13.2px;background:#c2c2c6"></div>
<div style="left:469.4px;top:316.2px;width:0.7px;height:13.2px;background:#e6e6ea"></div>
<div style="left:529.2px;top:316.2px;width:1px;height:13.2px;background:#c2c2c6"></div>
<div style="left:530.2px;top:316.2px;width:0.7px;height:13.2px;background:#e6e6ea"></div>
<div style="left:567px;top:316.2px;width:1px;height:13.2px;background:#c2c2c6"></div>
<div style="left:568px;top:316.2px;width:0.7px;height:13.2px;background:#e6e6ea"></div>
<div class="t" style="top:316.7px;line-height:12px;font-size:8.6px;color:#222;left:26.7px;">Mark</div>
<div class="t" style="top:316.7px;line-height:12px;font-size:8.6px;color:#222;left:108.3px;">Seq/Lot</div>
<div class="t" style="top:316.7px;line-height:12px;font-size:8.6px;color:#222;right:683.1px;text-align:right;">Qty</div>
<div class="t" style="top:316.7px;line-height:12px;font-size:8.6px;color:#222;left:173px;">Type</div>
<div class="t" style="top:316.7px;line-height:12px;font-size:8.6px;color:#222;left:200.8px;">On Order</div>
<div class="t" style="top:316.7px;line-height:12px;font-size:8.6px;color:#222;left:244.8px;">Req #</div>
<div class="t" style="top:316.7px;line-height:12px;font-size:8.6px;color:#222;left:282.5px;">Item #</div>
<div class="t" style="top:316.7px;line-height:12px;font-size:8.6px;color:#222;left:316px;">Supplier</div>
<div class="t" style="top:316.7px;line-height:12px;font-size:8.6px;color:#222;left:390.2px;">PO #</div>
<div class="t" style="top:316.7px;line-height:12px;font-size:8.6px;color:#222;left:432.6px;">Location</div>
<div class="t" style="top:316.7px;line-height:12px;font-size:8.6px;color:#222;left:472.7px;">Delivery Date</div>
<div class="t" style="top:316.7px;line-height:12px;font-size:8.6px;color:#222;left:533.5px;">Cut List</div>
<div class="t" style="top:316.7px;line-height:12px;font-size:8.6px;color:#222;left:571.3px;">TFS Date</div>
<svg style="position:absolute;left:97px;top:319.5px" width="6" height="6" viewBox="0 0 6 6"><path d="M0.5 0.5 L5.5 5.5 L0.5 5.5 Z" fill="#9a9a9a"/></svg>
<div style="left:24px;top:329.4px;width:594.5px;height:13.2px;background:#0a96d9"></div>
<div style="left:103.9px;top:329.4px;width:1.2px;height:13.2px;background:#1a2a3a"></div>
<div style="left:146.8px;top:329.4px;width:1.2px;height:13.2px;background:#1a2a3a"></div>
<div style="left:168.8px;top:329.4px;width:1.2px;height:13.2px;background:#1a2a3a"></div>
<div style="left:196.6px;top:329.4px;width:1.2px;height:13.2px;background:#1a2a3a"></div>
<div style="left:241.2px;top:329.4px;width:1.2px;height:13.2px;background:#1a2a3a"></div>
<div style="left:279.1px;top:329.4px;width:1.2px;height:13.2px;background:#1a2a3a"></div>
<div style="left:311.6px;top:329.4px;width:1.2px;height:13.2px;background:#1a2a3a"></div>
<div style="left:386.1px;top:329.4px;width:1.2px;height:13.2px;background:#1a2a3a"></div>
<div style="left:428.5px;top:329.4px;width:1.2px;height:13.2px;background:#1a2a3a"></div>
<div style="left:468.3px;top:329.4px;width:1.2px;height:13.2px;background:#1a2a3a"></div>
<div style="left:529.1px;top:329.4px;width:1.2px;height:13.2px;background:#1a2a3a"></div>
<div style="left:566.9px;top:329.4px;width:1.2px;height:13.2px;background:#1a2a3a"></div>
<div style="left:24px;top:341.6px;width:594.5px;height:1px;background:#2a3848"></div>
<div class="t" style="top:329px;line-height:12px;font-size:8.6px;color:#fff;left:24.8px;">B282</div>
<div class="t" style="top:329px;line-height:12px;font-size:8.6px;color:#fff;left:106.8px;">3</div>
<div class="t" style="top:329px;line-height:12px;font-size:8.6px;color:#fff;right:681.4px;text-align:right;">1</div>
<div class="t" style="top:329px;line-height:12px;font-size:8.6px;color:#fff;left:171.8px;">REQ</div>
<div class="t" style="top:329px;line-height:12px;font-size:8.6px;color:#fff;left:243.7px;">PDC</div>
<div class="t" style="top:329px;line-height:12px;font-size:8.6px;color:#fff;left:281.3px;">5,980</div>
<svg style="position:absolute;left:621px;top:318.5px" width="5" height="4" viewBox="0 0 5 4"><path d="M0.5 3.5 L2.5 0.5 L4.5 3.5 Z" fill="#b8b8bc"/></svg>
<svg style="position:absolute;left:621px;top:359px" width="5" height="4" viewBox="0 0 5 4"><path d="M0.5 0.5 L2.5 3.5 L4.5 0.5 Z" fill="#b8b8bc"/></svg>
<div style="left:225.5px;top:370.5px;width:98.4px;height:15px;background:#1c7bba;border:1px solid #15507e;box-shadow:inset 0 0 0 1px #5a9ccc;box-sizing:border-box"></div>
<div class="t" style="top:372.4px;line-height:12px;font-size:8.55px;color:#f2f6fa;left:225.5px;width:98.4px;text-align:center;">Open Requisition (F5)</div>
<div style="left:329.3px;top:370px;width:98.4px;height:16.1px;background:#e6e6ea;border:1px solid #b9b9be;box-sizing:border-box"></div>
<div class="t" style="top:372.2px;line-height:12px;font-size:8.8px;color:#8a8a8e;left:329.3px;width:98.4px;text-align:center;">Open Cut List</div>
<svg style="position:absolute;left:0;top:0" width="849" height="446" viewBox="0 0 849 446"><path d="M633.3 191 L747.5 322.5" stroke="#f3b41b" stroke-width="3" fill="none"/><path d="M737.5 319 L748.6 323.6 L745.5 311.5" stroke="#f3b41b" stroke-width="3" fill="none" stroke-linejoin="miter"/></svg>
</body></html>
